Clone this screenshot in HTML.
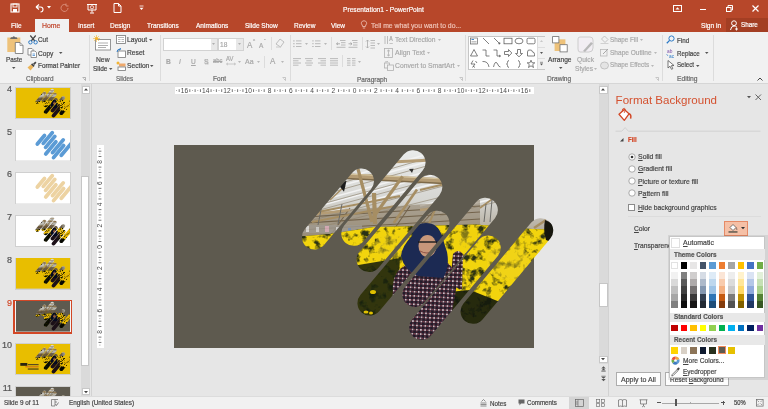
<!DOCTYPE html><html><head><meta charset="utf-8"><style>
html,body{margin:0;padding:0;}
body{width:768px;height:409px;overflow:hidden;position:relative;background:#E6E6E6;font-family:"Liberation Sans", sans-serif;}
.t{position:absolute;white-space:nowrap;line-height:1;-webkit-text-stroke:0.2px currentColor;}
#w{position:absolute;left:0;top:0;width:768px;height:409px;will-change:transform;}
.r{position:absolute;}
svg.r{overflow:visible;}
</style></head><body><div id="w">
<div class="r" style="left:0px;top:0px;width:768px;height:32px;background:#B7472A;"></div>
<div class="r" style="left:726px;top:18px;width:42px;height:14px;background:#A33E23;"></div>
<div class="r" style="left:35px;top:18.8px;width:34px;height:14.2px;background:#F1F1F1;"></div>
<span class="t" style="left:343.0px;top:5.88px;font-size:7.51px;color:#FFFFFF;font-weight:normal;transform:scaleX(0.8850);transform-origin:0 0;">Presentation1 - PowerPoint</span>
<svg class="r" style="left:10px;top:3px;" width="10" height="10" viewBox="0 0 10 10"><rect x="1" y="1" width="8" height="8" fill="none" stroke="#fff" stroke-width="1.1"/><rect x="3" y="1" width="4" height="3" fill="none" stroke="#fff" stroke-width="0.9"/><rect x="3" y="6" width="4" height="3" fill="#fff"/></svg>
<svg class="r" style="left:34px;top:3px;" width="12" height="10" viewBox="0 0 12 10"><path d="M2 4 L5 1.5 M2 4 L5 6.5 M2 4 H6.5 Q9 4 9 6.5 Q9 9 6.5 9" fill="none" stroke="#fff" stroke-width="1.1"/></svg>
<svg class="r" style="left:47px;top:6px;" width="4" height="3" viewBox="0 0 4 3"><path d="M0 0 H4 L2 2.5Z" fill="#fff"/></svg>
<svg class="r" style="left:60px;top:3px;" width="10" height="10" viewBox="0 0 10 10"><path d="M8 5 A3.5 3.5 0 1 1 6 1.8 M6 0.5 V3 H8.5" fill="none" stroke="#D98C77" stroke-width="1"/></svg>
<svg class="r" style="left:86px;top:3px;" width="12" height="11" viewBox="0 0 12 11"><path d="M1 1.5 H11 M2 1.5 V7 H10 V1.5 M6 7 V9.5 M4 10 H8" fill="none" stroke="#fff" stroke-width="1"/><circle cx="6" cy="4.3" r="1.6" fill="none" stroke="#fff" stroke-width="0.8"/></svg>
<svg class="r" style="left:113px;top:3px;" width="9" height="10" viewBox="0 0 9 10"><path d="M1 0.5 H5.5 L8 3 V9.5 H1Z M5.5 0.5 V3 H8" fill="none" stroke="#fff" stroke-width="1"/></svg>
<svg class="r" style="left:139px;top:6px;" width="5" height="5" viewBox="0 0 5 5"><path d="M0.5 0 H4.5" stroke="#fff" stroke-width="0.8"/><path d="M0.5 1.8 H4.5 L2.5 4Z" fill="#fff"/></svg>
<svg class="r" style="left:673px;top:5px;" width="9" height="7" viewBox="0 0 9 7"><rect x="0.5" y="0.5" width="8" height="6" fill="none" stroke="#fff" stroke-width="1"/><path d="M2.5 4.5 L4.5 2.3 L6.5 4.5Z" fill="#fff"/></svg>
<div class="r" style="left:700px;top:9px;width:6px;height:1.2px;background:#fff;"></div>
<svg class="r" style="left:726px;top:5px;" width="7" height="7" viewBox="0 0 7 7"><rect x="0.5" y="2.5" width="4.5" height="4" fill="none" stroke="#fff" stroke-width="1"/><path d="M2 2.5 V0.5 H6.5 V5 H5" fill="none" stroke="#fff" stroke-width="1"/></svg>
<svg class="r" style="left:752px;top:5px;" width="7" height="7" viewBox="0 0 7 7"><path d="M0.5 0.5 L6.5 6.5 M6.5 0.5 L0.5 6.5" stroke="#fff" stroke-width="1.2"/></svg>
<span class="t" style="left:10.9px;top:21.72px;font-size:7.40px;color:#FFFFFF;font-weight:normal;transform:scaleX(0.8850);transform-origin:0 0;">File</span>
<span class="t" style="left:77.6px;top:21.72px;font-size:7.40px;color:#FFFFFF;font-weight:normal;transform:scaleX(0.8850);transform-origin:0 0;">Insert</span>
<span class="t" style="left:110.0px;top:21.72px;font-size:7.40px;color:#FFFFFF;font-weight:normal;transform:scaleX(0.8850);transform-origin:0 0;">Design</span>
<span class="t" style="left:146.6px;top:21.72px;font-size:7.40px;color:#FFFFFF;font-weight:normal;transform:scaleX(0.8850);transform-origin:0 0;">Transitions</span>
<span class="t" style="left:195.5px;top:21.72px;font-size:7.40px;color:#FFFFFF;font-weight:normal;transform:scaleX(0.8850);transform-origin:0 0;">Animations</span>
<span class="t" style="left:245.4px;top:21.72px;font-size:7.40px;color:#FFFFFF;font-weight:normal;transform:scaleX(0.8850);transform-origin:0 0;">Slide Show</span>
<span class="t" style="left:293.9px;top:21.72px;font-size:7.40px;color:#FFFFFF;font-weight:normal;transform:scaleX(0.8850);transform-origin:0 0;">Review</span>
<span class="t" style="left:331.0px;top:21.72px;font-size:7.40px;color:#FFFFFF;font-weight:normal;transform:scaleX(0.8850);transform-origin:0 0;">View</span>
<span class="t" style="left:42.4px;top:21.59px;font-size:7.80px;color:#C0442A;font-weight:normal;transform:scaleX(0.8850);transform-origin:0 0;">Home</span>
<svg class="r" style="left:361px;top:20px;" width="6" height="10" viewBox="0 0 6 10"><path d="M3 0.8 A2.4 2.4 0 0 1 4.8 5 L4.4 6.5 H1.6 L1.2 5 A2.4 2.4 0 0 1 3 0.8Z M1.8 8 H4.2" fill="none" stroke="#F0C8BC" stroke-width="0.8"/></svg>
<span class="t" style="left:371.0px;top:21.61px;font-size:7.74px;color:#EFC3B6;font-weight:normal;transform:scaleX(0.8850);transform-origin:0 0;">Tell me what you want to do...</span>
<span class="t" style="left:700.5px;top:21.70px;font-size:7.46px;color:#FFFFFF;font-weight:normal;transform:scaleX(0.8850);transform-origin:0 0;">Sign in</span>
<svg class="r" style="left:730px;top:20px;" width="9" height="11" viewBox="0 0 9 11"><circle cx="4" cy="3.2" r="2.4" fill="none" stroke="#fff" stroke-width="1"/><path d="M0.5 10 Q1 6 4 6 Q6 6 6.8 7" fill="none" stroke="#fff" stroke-width="1"/><path d="M6.5 7.5 V10.5 M5 9 H8" stroke="#fff" stroke-width="0.9"/></svg>
<span class="t" style="left:741.0px;top:21.82px;font-size:7.12px;color:#FFFFFF;font-weight:normal;transform:scaleX(0.8850);transform-origin:0 0;">Share</span>
<div class="r" style="left:0px;top:32px;width:768px;height:51px;background:#F1F1F1;"></div>
<div class="r" style="left:0px;top:83px;width:768px;height:1px;background:#D6D6D6;"></div>
<div class="r" style="left:88.5px;top:35px;width:1px;height:46px;background:#DCDCDC;"></div>
<div class="r" style="left:159.5px;top:35px;width:1px;height:46px;background:#DCDCDC;"></div>
<div class="r" style="left:289.5px;top:35px;width:1px;height:46px;background:#DCDCDC;"></div>
<div class="r" style="left:465px;top:35px;width:1px;height:46px;background:#DCDCDC;"></div>
<div class="r" style="left:661.5px;top:35px;width:1px;height:46px;background:#DCDCDC;"></div>
<div class="r" style="left:713px;top:35px;width:1px;height:46px;background:#DCDCDC;"></div>
<svg class="r" style="left:6px;top:35px;" width="18" height="19" viewBox="0 0 18 19"><rect x="1.3" y="2.5" width="13" height="14.5" fill="#EEC27A"/><path d="M4 4 L5 2.2 H6.5 Q7.8 0.3 9.1 2.2 H10.6 L11.6 4Z" fill="#6A6A6A"/><path d="M9.3 7.5 H14 L17 10.5 V18.5 H9.3Z" fill="#fff" stroke="#6F6F6F" stroke-width="0.8"/><path d="M14 7.5 V10.5 H17" fill="none" stroke="#6F6F6F" stroke-width="0.6"/></svg>
<span class="t" style="left:6.0px;top:55.78px;font-size:7.23px;color:#444444;font-weight:normal;transform:scaleX(0.8850);transform-origin:0 0;">Paste</span>
<svg class="r" style="left:12px;top:67px;" width="4" height="3" viewBox="0 0 4 3"><path d="M0 0 H3.5 L1.75 2Z" fill="#555"/></svg>
<svg class="r" style="left:27.5px;top:35px;" width="10" height="10" viewBox="0 0 10 10"><path d="M2.3 0.5 L6.8 6 M7.7 0.5 L3.2 6" stroke="#444" stroke-width="1.2"/><circle cx="2.4" cy="7.3" r="1.7" fill="none" stroke="#2B79C5" stroke-width="1"/><circle cx="7.6" cy="7.3" r="1.7" fill="none" stroke="#2B79C5" stroke-width="1"/></svg>
<span class="t" style="left:38.4px;top:36.48px;font-size:7.23px;color:#444444;font-weight:normal;transform:scaleX(0.8850);transform-origin:0 0;">Cut</span>
<svg class="r" style="left:27px;top:48px;" width="10" height="10" viewBox="0 0 10 10"><path d="M1 0.5 H5 L6 1.5 V7 H1Z" fill="#fff" stroke="#777" stroke-width="0.8"/><path d="M4 3 H8 L9.5 4.5 V9.5 H4Z" fill="#fff" stroke="#777" stroke-width="0.8"/><path d="M5.5 6 H8 M5.5 7.5 H8" stroke="#2B79C5" stroke-width="0.7"/></svg>
<span class="t" style="left:38.4px;top:49.90px;font-size:7.46px;color:#444444;font-weight:normal;transform:scaleX(0.8850);transform-origin:0 0;">Copy</span>
<svg class="r" style="left:59px;top:52px;" width="4" height="3" viewBox="0 0 4 3"><path d="M0 0 H3.5 L1.75 2Z" fill="#555"/></svg>
<svg class="r" style="left:27px;top:61px;" width="10" height="10" viewBox="0 0 10 10"><path d="M0.5 6.5 L4 3.5 L6.5 6 L3.5 9.5Z" fill="#EBB55A"/><path d="M4 3.5 L5.2 2.3 L7.7 4.8 L6.5 6Z" fill="#444"/><path d="M6 2.8 L8.3 0.5 L9.5 1.7 L7.2 4Z" fill="#444"/></svg>
<span class="t" style="left:38.4px;top:62.19px;font-size:7.20px;color:#444444;font-weight:normal;transform:scaleX(0.8850);transform-origin:0 0;">Format Painter</span>
<span class="t" style="left:25.5px;top:75.47px;font-size:7.27px;color:#666666;font-weight:normal;transform:scaleX(0.8850);transform-origin:0 0;">Clipboard</span>
<svg class="r" style="left:82px;top:77px;" width="4" height="4" viewBox="0 0 4 4"><path d="M0.5 0.5 H3.5 V3.5 M1.5 1.5 L3.5 3.5" fill="none" stroke="#888" stroke-width="0.6"/></svg>
<svg class="r" style="left:93px;top:35px;" width="19" height="17" viewBox="0 0 19 17"><rect x="2.5" y="4.5" width="15" height="10.5" fill="#fff" stroke="#8A8A8A" stroke-width="0.9"/><path d="M5 8 H15 M5 10.5 H15 M5 12.5 H13" stroke="#9A9A9A" stroke-width="0.8"/><circle cx="3.5" cy="3.5" r="1.6" fill="#F2B535"/><path d="M3.5 0 V7 M0 3.5 H7 M1 1 L6 6 M6 1 L1 6" stroke="#F2B535" stroke-width="0.6"/></svg>
<span class="t" style="left:96.4px;top:55.64px;font-size:7.63px;color:#444444;font-weight:normal;transform:scaleX(0.8850);transform-origin:0 0;">New</span>
<span class="t" style="left:93.3px;top:64.74px;font-size:7.34px;color:#444444;font-weight:normal;transform:scaleX(0.8850);transform-origin:0 0;">Slide</span>
<svg class="r" style="left:108.5px;top:67.5px;" width="4" height="3" viewBox="0 0 4 3"><path d="M0 0 H3.5 L1.75 2Z" fill="#555"/></svg>
<svg class="r" style="left:116px;top:35px;" width="10" height="9" viewBox="0 0 10 9"><rect x="0.5" y="0.5" width="9" height="8" fill="#fff" stroke="#777" stroke-width="0.8"/><path d="M2 2.5 H8 M2 4.5 H4.5 M5.5 4.5 H8 M2 6.5 H4.5 M5.5 6.5 H8" stroke="#999" stroke-width="0.7"/></svg>
<span class="t" style="left:126.9px;top:36.36px;font-size:7.57px;color:#444444;font-weight:normal;transform:scaleX(0.8850);transform-origin:0 0;">Layout</span>
<svg class="r" style="left:149px;top:39px;" width="4" height="3" viewBox="0 0 4 3"><path d="M0 0 H3.5 L1.75 2Z" fill="#555"/></svg>
<svg class="r" style="left:116px;top:48px;" width="10" height="10" viewBox="0 0 10 10"><rect x="2" y="3" width="7.5" height="6.5" fill="#fff" stroke="#777" stroke-width="0.8"/><path d="M1 4 Q1 1 4.5 1.2 L4 0 M4.5 1.2 L3.2 2.2" fill="none" stroke="#2B79C5" stroke-width="1"/></svg>
<span class="t" style="left:126.9px;top:49.46px;font-size:7.57px;color:#444444;font-weight:normal;transform:scaleX(0.8850);transform-origin:0 0;">Reset</span>
<svg class="r" style="left:116px;top:61px;" width="10" height="10" viewBox="0 0 10 10"><circle cx="2" cy="2" r="1.5" fill="#F2B535"/><rect x="3" y="2.5" width="6.5" height="3" fill="#EFA96D"/><rect x="2" y="6" width="7.5" height="3.5" fill="#fff" stroke="#777" stroke-width="0.8"/></svg>
<span class="t" style="left:126.9px;top:62.36px;font-size:7.57px;color:#444444;font-weight:normal;transform:scaleX(0.8850);transform-origin:0 0;">Section</span>
<svg class="r" style="left:150px;top:65px;" width="4" height="3" viewBox="0 0 4 3"><path d="M0 0 H3.5 L1.75 2Z" fill="#555"/></svg>
<span class="t" style="left:116.2px;top:75.52px;font-size:7.12px;color:#666666;font-weight:normal;transform:scaleX(0.8850);transform-origin:0 0;">Slides</span>
<div class="r" style="left:162.5px;top:38px;width:55px;height:12.5px;background:#FFFFFF;box-sizing:border-box;border:1px solid #D2D2D2;"></div>
<div class="r" style="left:210.5px;top:39px;width:6px;height:10.5px;background:#E8E8E8;"></div>
<svg class="r" style="left:212px;top:43px;" width="4" height="3" viewBox="0 0 4 3"><path d="M0 0 H3 L1.5 2Z" fill="#B0B0B0"/></svg>
<div class="r" style="left:217.5px;top:38px;width:26px;height:12.5px;background:#FFFFFF;box-sizing:border-box;border:1px solid #D2D2D2;"></div>
<div class="r" style="left:236px;top:39px;width:6.5px;height:10.5px;background:#E8E8E8;"></div>
<svg class="r" style="left:238px;top:43px;" width="4" height="3" viewBox="0 0 4 3"><path d="M0 0 H3 L1.5 2Z" fill="#B0B0B0"/></svg>
<span class="t" style="left:220.0px;top:40.90px;font-size:7.46px;color:#A8A8A8;font-weight:normal;transform:scaleX(0.8850);transform-origin:0 0;">18</span>
<span class="t" style="left:247.0px;top:40.87px;font-size:9.04px;color:#A8A8A8;font-weight:normal;transform:scaleX(0.8850);transform-origin:0 0;">A</span>
<span class="t" style="left:252.5px;top:38.70px;font-size:5.08px;color:#A8A8A8;font-weight:normal;transform:scaleX(0.8850);transform-origin:0 0;">^</span>
<span class="t" style="left:259.0px;top:41.94px;font-size:7.34px;color:#A8A8A8;font-weight:normal;transform:scaleX(0.8850);transform-origin:0 0;">A</span>
<span class="t" style="left:264.0px;top:38.51px;font-size:5.65px;color:#A8A8A8;font-weight:normal;transform:scaleX(0.8850);transform-origin:0 0;">ˇ</span>
<div class="r" style="left:270.5px;top:37px;width:1px;height:13px;background:#DCDCDC;"></div>
<svg class="r" style="left:275px;top:38px;" width="10" height="10" viewBox="0 0 10 10"><path d="M1 6 L5 1 L9 4 L5.5 9Z" fill="none" stroke="#B8B8B8" stroke-width="0.9"/><path d="M1 9 H6" stroke="#C8C8C8"/></svg>
<span class="t" style="left:165.5px;top:57.80px;font-size:7.46px;color:#A8A8A8;font-weight:bold;transform:scaleX(0.8850);transform-origin:0 0;">B</span>
<span class="t" style="left:178.8px;top:57.80px;font-size:7.46px;color:#A8A8A8;font-weight:normal;transform:scaleX(0.8850);transform-origin:0 0;font-style:italic">I</span>
<span class="t" style="left:190.5px;top:57.80px;font-size:7.46px;color:#A8A8A8;font-weight:normal;transform:scaleX(0.8850);transform-origin:0 0;text-decoration:underline">U</span>
<span class="t" style="left:203.5px;top:57.73px;font-size:7.68px;color:#A8A8A8;font-weight:normal;transform:scaleX(0.8850);transform-origin:0 0;text-shadow:0.7px 0.7px 0 #CFCFCF">S</span>
<span class="t" style="left:213.3px;top:58.10px;font-size:6.55px;color:#A8A8A8;font-weight:normal;transform:scaleX(0.8850);transform-origin:0 0;text-decoration:line-through">abc</span>
<span class="t" style="left:226.3px;top:56.20px;font-size:6.55px;color:#A8A8A8;font-weight:normal;transform:scaleX(0.8850);transform-origin:0 0;">AV</span>
<svg class="r" style="left:226px;top:62px;" width="10" height="4" viewBox="0 0 10 4"><path d="M0.5 2 H9.5 M0.5 2 L2 0.8 M0.5 2 L2 3.2 M9.5 2 L8 0.8 M9.5 2 L8 3.2" fill="none" stroke="#B0B0B0" stroke-width="0.6"/></svg>
<svg class="r" style="left:237.5px;top:61px;" width="4" height="3" viewBox="0 0 4 3"><path d="M0 0 H3 L1.5 2Z" fill="#B8B8B8"/></svg>
<span class="t" style="left:244.6px;top:57.65px;font-size:7.91px;color:#A8A8A8;font-weight:normal;transform:scaleX(0.8850);transform-origin:0 0;">Aa</span>
<svg class="r" style="left:256.5px;top:61px;" width="4" height="3" viewBox="0 0 4 3"><path d="M0 0 H3 L1.5 2Z" fill="#B8B8B8"/></svg>
<div class="r" style="left:264px;top:56px;width:1px;height:12px;background:#DCDCDC;"></div>
<span class="t" style="left:270.0px;top:57.27px;font-size:9.04px;color:#A8A8A8;font-weight:normal;transform:scaleX(0.8850);transform-origin:0 0;">A</span>
<svg class="r" style="left:281px;top:61px;" width="4" height="3" viewBox="0 0 4 3"><path d="M0 0 H3 L1.5 2Z" fill="#B8B8B8"/></svg>
<span class="t" style="left:212.7px;top:75.42px;font-size:7.40px;color:#666666;font-weight:normal;transform:scaleX(0.8850);transform-origin:0 0;">Font</span>
<svg class="r" style="left:282px;top:77px;" width="4" height="4" viewBox="0 0 4 4"><path d="M0.5 0.5 H3.5 V3.5 M1.5 1.5 L3.5 3.5" fill="none" stroke="#AAA" stroke-width="0.6"/></svg>
<svg class="r" style="left:292.5px;top:40px;" width="9" height="8" viewBox="0 0 9 8"><rect x="0.3" y="0.3" width="1.2" height="1.2" fill="#B0B0B0"/><path d="M3 0.9 H8.5" stroke="#B4B4B4" stroke-width="0.9"/><rect x="0.3" y="3.0999999999999996" width="1.2" height="1.2" fill="#B0B0B0"/><path d="M3 3.6999999999999997 H8.5" stroke="#B4B4B4" stroke-width="0.9"/><rect x="0.3" y="5.8999999999999995" width="1.2" height="1.2" fill="#B0B0B0"/><path d="M3 6.5 H8.5" stroke="#B4B4B4" stroke-width="0.9"/></svg>
<svg class="r" style="left:304.5px;top:43px;" width="4" height="3" viewBox="0 0 4 3"><path d="M0 0 H3 L1.5 2Z" fill="#B8B8B8"/></svg>
<svg class="r" style="left:312px;top:40px;" width="9" height="8" viewBox="0 0 9 8"><path d="M0.3 0.9 H1.6" stroke="#B0B0B0" stroke-width="1"/><path d="M3 0.9 H8.5" stroke="#B4B4B4" stroke-width="0.9"/><path d="M0.3 3.6999999999999997 H1.6" stroke="#B0B0B0" stroke-width="1"/><path d="M3 3.6999999999999997 H8.5" stroke="#B4B4B4" stroke-width="0.9"/><path d="M0.3 6.5 H1.6" stroke="#B0B0B0" stroke-width="1"/><path d="M3 6.5 H8.5" stroke="#B4B4B4" stroke-width="0.9"/></svg>
<svg class="r" style="left:323.5px;top:43px;" width="4" height="3" viewBox="0 0 4 3"><path d="M0 0 H3 L1.5 2Z" fill="#B8B8B8"/></svg>
<div class="r" style="left:331px;top:37px;width:1px;height:13px;background:#DCDCDC;"></div>
<svg class="r" style="left:335.5px;top:40px;" width="10" height="8" viewBox="0 0 10 8"><path d="M4 0.5 H9.5 M5 2.7 H9.5 M5 5 H9.5 M0.5 7.3 H9.5" stroke="#B4B4B4" stroke-width="0.9"/><path d="M0.5 3.8 H4 M0.5 3.8 L2 2.5 M0.5 3.8 L2 5" fill="none" stroke="#A0A0A0" stroke-width="0.8"/></svg>
<svg class="r" style="left:347.5px;top:40px;" width="10" height="8" viewBox="0 0 10 8"><path d="M4 0.5 H9.5 M5 2.7 H9.5 M5 5 H9.5 M0.5 7.3 H9.5" stroke="#B4B4B4" stroke-width="0.9"/><path d="M0.5 3.8 H4 M4 3.8 L2.5 2.5 M4 3.8 L2.5 5" fill="none" stroke="#A0A0A0" stroke-width="0.8"/></svg>
<div class="r" style="left:361.5px;top:37px;width:1px;height:13px;background:#DCDCDC;"></div>
<svg class="r" style="left:366px;top:39px;" width="9" height="10" viewBox="0 0 9 10"><path d="M1.5 1 V9 M0 2.5 L1.5 1 L3 2.5 M0 7.5 L1.5 9 L3 7.5" fill="none" stroke="#A8A8A8" stroke-width="0.8"/><path d="M4.5 1.5 H9 M4.5 4 H9 M4.5 6.5 H9 M4.5 9 H9" stroke="#B4B4B4" stroke-width="0.9"/></svg>
<svg class="r" style="left:377px;top:43px;" width="4" height="3" viewBox="0 0 4 3"><path d="M0 0 H3 L1.5 2Z" fill="#B8B8B8"/></svg>
<svg class="r" style="left:292.5px;top:57.5px;" width="9" height="8" viewBox="0 0 9 8"><path d="M0 0.6 H8" stroke="#B4B4B4" stroke-width="0.9"/><path d="M0 2.8000000000000003 H5.5" stroke="#B4B4B4" stroke-width="0.9"/><path d="M0 5.0 H8" stroke="#B4B4B4" stroke-width="0.9"/><path d="M0 7.2 H5.5" stroke="#B4B4B4" stroke-width="0.9"/></svg>
<svg class="r" style="left:305px;top:57.5px;" width="9" height="8" viewBox="0 0 9 8"><path d="M0.0 0.6 H8.0" stroke="#B4B4B4" stroke-width="0.9"/><path d="M1.25 2.8000000000000003 H6.75" stroke="#B4B4B4" stroke-width="0.9"/><path d="M0.0 5.0 H8.0" stroke="#B4B4B4" stroke-width="0.9"/><path d="M1.25 7.2 H6.75" stroke="#B4B4B4" stroke-width="0.9"/></svg>
<svg class="r" style="left:317.8px;top:57.5px;" width="9" height="8" viewBox="0 0 9 8"><path d="M0 0.6 H8" stroke="#B4B4B4" stroke-width="0.9"/><path d="M2.5 2.8000000000000003 H8.0" stroke="#B4B4B4" stroke-width="0.9"/><path d="M0 5.0 H8" stroke="#B4B4B4" stroke-width="0.9"/><path d="M2.5 7.2 H8.0" stroke="#B4B4B4" stroke-width="0.9"/></svg>
<svg class="r" style="left:330.2px;top:57.5px;" width="9" height="8" viewBox="0 0 9 8"><path d="M0 0.6 H8" stroke="#B4B4B4" stroke-width="0.9"/><path d="M0 2.8000000000000003 H8" stroke="#B4B4B4" stroke-width="0.9"/><path d="M0 5.0 H8" stroke="#B4B4B4" stroke-width="0.9"/><path d="M0 7.2 H8" stroke="#B4B4B4" stroke-width="0.9"/></svg>
<div class="r" style="left:342.4px;top:55px;width:1px;height:12px;background:#DCDCDC;"></div>
<svg class="r" style="left:347px;top:57.5px;" width="9" height="8" viewBox="0 0 9 8"><path d="M0 0.6 H3.5 M0 2.8 H3.5 M0 5 H3.5 M0 7.2 H3.5 M5 0.6 H8.5 M5 2.8 H8.5 M5 5 H8.5 M5 7.2 H8.5" stroke="#B4B4B4" stroke-width="0.9"/></svg>
<svg class="r" style="left:358px;top:61px;" width="4" height="3" viewBox="0 0 4 3"><path d="M0 0 H3 L1.5 2Z" fill="#B8B8B8"/></svg>
<svg class="r" style="left:384px;top:35px;" width="9" height="10" viewBox="0 0 9 10"><path d="M1 1 V9 M3.5 1 V9" stroke="#B0B0B0" stroke-width="0.8"/><path d="M5.5 6 L7 1 L8.5 6 M6 4.2 H8" fill="none" stroke="#A8A8A8" stroke-width="0.8"/><path d="M5.5 8.5 H8.8" stroke="#B0B0B0" stroke-width="0.7"/></svg>
<span class="t" style="left:394.6px;top:36.36px;font-size:7.57px;color:#A8A8A8;font-weight:normal;transform:scaleX(0.8850);transform-origin:0 0;">Text Direction</span>
<svg class="r" style="left:437.5px;top:39px;" width="4" height="3" viewBox="0 0 4 3"><path d="M0 0 H3 L1.5 2Z" fill="#B8B8B8"/></svg>
<svg class="r" style="left:384px;top:48px;" width="9" height="10" viewBox="0 0 9 10"><rect x="0.5" y="0.5" width="8" height="9" fill="none" stroke="#B0B0B0" stroke-width="0.8"/><path d="M4.5 2 V8 M3 3.3 L4.5 2 L6 3.3 M3 6.7 L4.5 8 L6 6.7" fill="none" stroke="#A8A8A8" stroke-width="0.7"/></svg>
<span class="t" style="left:394.6px;top:49.27px;font-size:7.85px;color:#A8A8A8;font-weight:normal;transform:scaleX(0.8850);transform-origin:0 0;">Align Text</span>
<svg class="r" style="left:427px;top:52px;" width="4" height="3" viewBox="0 0 4 3"><path d="M0 0 H3 L1.5 2Z" fill="#B8B8B8"/></svg>
<svg class="r" style="left:384px;top:61px;" width="10" height="10" viewBox="0 0 10 10"><rect x="0.5" y="2" width="5" height="5" fill="none" stroke="#B0B0B0" stroke-width="0.8"/><rect x="3.5" y="4" width="6" height="5.5" fill="#F1F1F1" stroke="#B0B0B0" stroke-width="0.8"/><path d="M1 1 L4 0.5" stroke="#B0B0B0" stroke-width="0.8"/></svg>
<span class="t" style="left:394.6px;top:62.24px;font-size:7.65px;color:#A8A8A8;font-weight:normal;transform:scaleX(0.8850);transform-origin:0 0;">Convert to SmartArt</span>
<svg class="r" style="left:456.5px;top:65px;" width="4" height="3" viewBox="0 0 4 3"><path d="M0 0 H3 L1.5 2Z" fill="#B8B8B8"/></svg>
<span class="t" style="left:356.7px;top:75.65px;font-size:7.31px;color:#666666;font-weight:normal;transform:scaleX(0.8850);transform-origin:0 0;">Paragraph</span>
<svg class="r" style="left:459px;top:77px;" width="4" height="4" viewBox="0 0 4 4"><path d="M0.5 0.5 H3.5 V3.5 M1.5 1.5 L3.5 3.5" fill="none" stroke="#AAA" stroke-width="0.6"/></svg>
<div class="r" style="left:468.4px;top:35.5px;width:77px;height:34.5px;background:#FFFFFF;box-sizing:border-box;border:1px solid #C6C6C6;"></div>
<div class="r" style="left:537.5px;top:36.5px;width:7.5px;height:32.5px;background:#F1F1F1;"></div>
<div class="r" style="left:537.5px;top:46.8px;width:7.5px;height:0.8px;background:#DDDDDD;"></div>
<div class="r" style="left:537.5px;top:57.8px;width:7.5px;height:0.8px;background:#DDDDDD;"></div>
<div class="r" style="left:537px;top:36.5px;width:0.8px;height:32.5px;background:#DDDDDD;"></div>
<svg class="r" style="left:539.5px;top:40px;" width="4" height="3" viewBox="0 0 4 3"><path d="M0 2 H3 L1.5 0Z" fill="#C8C8C8"/></svg>
<svg class="r" style="left:539.5px;top:52px;" width="4" height="3" viewBox="0 0 4 3"><path d="M0 0 H3 L1.5 2Z" fill="#555"/></svg>
<svg class="r" style="left:539.5px;top:62px;" width="4" height="4" viewBox="0 0 4 4"><path d="M0 0.3 H3" stroke="#555" stroke-width="0.6"/><path d="M0 1.5 H3 L1.5 3.5Z" fill="#555"/></svg>
<svg class="r" style="left:469.4px;top:36.3px;" width="10" height="10" viewBox="0 0 10 10"><g transform="translate(5 5)"><rect x="-3.5" y="-3" width="7" height="6" fill="none" stroke="#666" stroke-width="0.7"/><path d="M-2.5 -1.5 H0" stroke="#2B79C5" stroke-width="0.9"/><path d="M-2.5 0.5 H2.5 M-2.5 2 H2.5" stroke="#999" stroke-width="0.6"/></g></svg>
<svg class="r" style="left:480.7px;top:36.3px;" width="10" height="10" viewBox="0 0 10 10"><g transform="translate(5 5)"><path d="M-3 -3 L3 3" fill="none" stroke="#555" stroke-width="0.75"/></g></svg>
<svg class="r" style="left:491.6px;top:36.3px;" width="10" height="10" viewBox="0 0 10 10"><g transform="translate(5 5)"><path d="M-3 -3 L3 3 M3 3 L1.2 2.6 M3 3 L2.6 1.2" fill="none" stroke="#555" stroke-width="0.75"/></g></svg>
<svg class="r" style="left:503.1px;top:36.3px;" width="10" height="10" viewBox="0 0 10 10"><g transform="translate(5 5)"><rect x="-4" y="-2.8" width="8" height="5.6" fill="none" stroke="#555" stroke-width="0.75"/></g></svg>
<svg class="r" style="left:514.4px;top:36.3px;" width="10" height="10" viewBox="0 0 10 10"><g transform="translate(5 5)"><ellipse cx="0" cy="0" rx="4" ry="2.8" fill="none" stroke="#555" stroke-width="0.75"/></g></svg>
<svg class="r" style="left:525.7px;top:36.3px;" width="10" height="10" viewBox="0 0 10 10"><g transform="translate(5 5)"><rect x="-4" y="-2.8" width="8" height="5.6" rx="1.3" fill="none" stroke="#555" stroke-width="0.75"/></g></svg>
<svg class="r" style="left:469.4px;top:47.8px;" width="10" height="10" viewBox="0 0 10 10"><g transform="translate(5 5)"><path d="M0 -3.5 L3.5 3 H-3.5Z" fill="none" stroke="#555" stroke-width="0.75"/></g></svg>
<svg class="r" style="left:480.7px;top:47.8px;" width="10" height="10" viewBox="0 0 10 10"><g transform="translate(5 5)"><path d="M-3.5 -3 H0 V3 H3.5" fill="none" stroke="#555" stroke-width="0.75"/></g></svg>
<svg class="r" style="left:491.6px;top:47.8px;" width="10" height="10" viewBox="0 0 10 10"><g transform="translate(5 5)"><path d="M-3.5 -3 H0 V3 H3.5 M3.5 3 L2 2 M3.5 3 L2 4" fill="none" stroke="#555" stroke-width="0.75"/></g></svg>
<svg class="r" style="left:503.1px;top:47.8px;" width="10" height="10" viewBox="0 0 10 10"><g transform="translate(5 5)"><path d="M-3.5 -1.5 H0.5 V-3.5 L3.8 0 L0.5 3.5 V1.5 H-3.5Z" fill="none" stroke="#555" stroke-width="0.75"/></g></svg>
<svg class="r" style="left:514.4px;top:47.8px;" width="10" height="10" viewBox="0 0 10 10"><g transform="translate(5 5)"><path d="M-1.5 -3.5 H1.5 V0.5 H3.5 L0 3.8 L-3.5 0.5 H-1.5Z" fill="none" stroke="#555" stroke-width="0.75"/></g></svg>
<svg class="r" style="left:525.7px;top:47.8px;" width="10" height="10" viewBox="0 0 10 10"><g transform="translate(5 5)"><path d="M-3.5 3 V-1 Q-3.5 -3.5 -1 -3 Q1 -3.5 1.5 -1 Q3.5 -1 3.5 1.2 V3Z" fill="none" stroke="#555" stroke-width="0.75"/></g></svg>
<svg class="r" style="left:469.4px;top:58.7px;" width="10" height="10" viewBox="0 0 10 10"><g transform="translate(5 5)"><path d="M-1 -3.5 L-3 0 L1 0 L-1.5 3.5 M1 3.5 L-1 2 M1.5 -3 L3 -1" fill="none" stroke="#555" stroke-width="0.75"/></g></svg>
<svg class="r" style="left:480.7px;top:58.7px;" width="10" height="10" viewBox="0 0 10 10"><g transform="translate(5 5)"><path d="M-3.5 -2.5 Q2 -3 3 3" fill="none" stroke="#555" stroke-width="0.75"/></g></svg>
<svg class="r" style="left:491.6px;top:58.7px;" width="10" height="10" viewBox="0 0 10 10"><g transform="translate(5 5)"><path d="M-3.5 3 Q-2 -3.5 0 -1 Q2 3.5 3.5 3" fill="none" stroke="#555" stroke-width="0.75"/></g></svg>
<svg class="r" style="left:503.1px;top:58.7px;" width="10" height="10" viewBox="0 0 10 10"><g transform="translate(5 5)"><path d="M1 -3.5 Q-0.5 -3.5 -0.5 -1.5 Q-0.5 0 -1.5 0 Q-0.5 0 -0.5 1.5 Q-0.5 3.5 1 3.5" fill="none" stroke="#555" stroke-width="0.75"/></g></svg>
<svg class="r" style="left:514.4px;top:58.7px;" width="10" height="10" viewBox="0 0 10 10"><g transform="translate(5 5)"><path d="M-1 -3.5 Q0.5 -3.5 0.5 -1.5 Q0.5 0 1.5 0 Q0.5 0 0.5 1.5 Q0.5 3.5 -1 3.5" fill="none" stroke="#555" stroke-width="0.75"/></g></svg>
<svg class="r" style="left:525.7px;top:58.7px;" width="10" height="10" viewBox="0 0 10 10"><g transform="translate(5 5)"><path d="M0 -3.8 L1.1 -1.2 L3.8 -1.2 L1.7 0.6 L2.5 3.5 L0 1.8 L-2.5 3.5 L-1.7 0.6 L-3.8 -1.2 L-1.1 -1.2Z" fill="none" stroke="#555" stroke-width="0.75"/></g></svg>
<svg class="r" style="left:552px;top:36px;" width="16" height="17" viewBox="0 0 16 17"><rect x="2.6" y="3.3" width="10.8" height="11.7" fill="#EEC27A"/><rect x="0.6" y="0.6" width="6.3" height="6.3" fill="#fff" stroke="#6F6F6F" stroke-width="0.8"/><rect x="8" y="8.7" width="7.2" height="7.2" fill="#fff" stroke="#6F6F6F" stroke-width="0.8"/></svg>
<span class="t" style="left:548.2px;top:55.90px;font-size:7.46px;color:#444444;font-weight:normal;transform:scaleX(0.8850);transform-origin:0 0;">Arrange</span>
<svg class="r" style="left:559px;top:67px;" width="4" height="3" viewBox="0 0 4 3"><path d="M0 0 H3.5 L1.75 2Z" fill="#555"/></svg>
<svg class="r" style="left:577px;top:36px;" width="18" height="18" viewBox="0 0 18 18"><path d="M3 1 H13 Q16 1 16 4 V12 Q16 16 12 16 H3 Q1 16 1 13 V3 Q1 1 3 1Z" fill="#F2EEF3" stroke="#C8C8C8" stroke-width="0.9"/><path d="M6 15 L14 6 L16 7.5 L8 16Z" fill="#B8B8B8"/></svg>
<span class="t" style="left:577.2px;top:55.88px;font-size:7.51px;color:#A8A8A8;font-weight:normal;transform:scaleX(0.8850);transform-origin:0 0;">Quick</span>
<span class="t" style="left:574.6px;top:64.70px;font-size:7.46px;color:#A8A8A8;font-weight:normal;transform:scaleX(0.8850);transform-origin:0 0;">Styles</span>
<svg class="r" style="left:594px;top:67.5px;" width="4" height="3" viewBox="0 0 4 3"><path d="M0 0 H3 L1.5 2Z" fill="#B8B8B8"/></svg>
<span class="t" style="left:546.8px;top:75.40px;font-size:7.46px;color:#666666;font-weight:normal;transform:scaleX(0.8850);transform-origin:0 0;">Drawing</span>
<svg class="r" style="left:600px;top:35px;" width="9" height="9" viewBox="0 0 9 9"><path d="M1.5 4 L4.5 1 L8 4.5 L5 7.5Z" fill="none" stroke="#B8B8B8" stroke-width="0.8"/><path d="M0.5 8.5 H8.5" stroke="#D0D0D0" stroke-width="1"/></svg>
<span class="t" style="left:610.2px;top:36.51px;font-size:7.14px;color:#A8A8A8;font-weight:normal;transform:scaleX(0.8850);transform-origin:0 0;">Shape Fill</span>
<svg class="r" style="left:640px;top:39px;" width="4" height="3" viewBox="0 0 4 3"><path d="M0 0 H3 L1.5 2Z" fill="#B8B8B8"/></svg>
<svg class="r" style="left:600px;top:48px;" width="9" height="9" viewBox="0 0 9 9"><rect x="0.5" y="1.5" width="6.5" height="6.5" fill="none" stroke="#B8B8B8" stroke-width="0.8"/><path d="M3 6 L8 1" stroke="#A8A8A8" stroke-width="1"/></svg>
<span class="t" style="left:610.2px;top:49.22px;font-size:7.41px;color:#A8A8A8;font-weight:normal;transform:scaleX(0.8850);transform-origin:0 0;">Shape Outline</span>
<svg class="r" style="left:653.5px;top:52px;" width="4" height="3" viewBox="0 0 4 3"><path d="M0 0 H3 L1.5 2Z" fill="#B8B8B8"/></svg>
<svg class="r" style="left:600px;top:61px;" width="9" height="9" viewBox="0 0 9 9"><ellipse cx="4.5" cy="4.5" rx="4" ry="3.5" fill="#E4E4E4" stroke="#B8B8B8" stroke-width="0.8"/></svg>
<span class="t" style="left:610.2px;top:61.91px;font-size:7.13px;color:#A8A8A8;font-weight:normal;transform:scaleX(0.8850);transform-origin:0 0;">Shape Effects</span>
<svg class="r" style="left:651px;top:64.5px;" width="4" height="3" viewBox="0 0 4 3"><path d="M0 0 H3 L1.5 2Z" fill="#B8B8B8"/></svg>
<svg class="r" style="left:655px;top:77px;" width="4" height="4" viewBox="0 0 4 4"><path d="M0.5 0.5 H3.5 V3.5 M1.5 1.5 L3.5 3.5" fill="none" stroke="#AAA" stroke-width="0.6"/></svg>
<svg class="r" style="left:666px;top:35px;" width="9" height="9" viewBox="0 0 9 9"><circle cx="5.5" cy="3.5" r="2.6" fill="none" stroke="#2B79C5" stroke-width="1"/><path d="M3.6 5.4 L0.8 8.2" stroke="#2B79C5" stroke-width="1.3"/></svg>
<span class="t" style="left:676.6px;top:36.55px;font-size:7.03px;color:#444444;font-weight:normal;transform:scaleX(0.8850);transform-origin:0 0;">Find</span>
<svg class="r" style="left:665.5px;top:48px;" width="10" height="10" viewBox="0 0 10 10"><text x="1" y="4.5" font-size="4.8" font-family="Liberation Sans" fill="#7A4EA8">ab</text><text x="3" y="9.5" font-size="4.8" font-family="Liberation Sans" fill="#2B79C5">ac</text><path d="M0.5 6 L2 8" stroke="#2B79C5" stroke-width="0.6"/></svg>
<span class="t" style="left:676.6px;top:49.55px;font-size:7.02px;color:#444444;font-weight:normal;transform:scaleX(0.8850);transform-origin:0 0;">Replace</span>
<svg class="r" style="left:705px;top:52px;" width="4" height="3" viewBox="0 0 4 3"><path d="M0 0 H3.5 L1.75 2Z" fill="#555"/></svg>
<svg class="r" style="left:667px;top:60px;" width="8" height="10" viewBox="0 0 8 10"><path d="M1 0.5 V8 L3 6.2 L4.5 9.3 L5.8 8.7 L4.4 5.6 L7 5.5Z" fill="#fff" stroke="#555" stroke-width="0.8"/></svg>
<span class="t" style="left:676.6px;top:62.08px;font-size:6.92px;color:#444444;font-weight:normal;transform:scaleX(0.8850);transform-origin:0 0;">Select</span>
<svg class="r" style="left:695.5px;top:64.5px;" width="4" height="3" viewBox="0 0 4 3"><path d="M0 0 H3.5 L1.75 2Z" fill="#555"/></svg>
<span class="t" style="left:677.0px;top:75.35px;font-size:7.62px;color:#666666;font-weight:normal;transform:scaleX(0.8850);transform-origin:0 0;">Editing</span>
<svg class="r" style="left:757px;top:77px;" width="6" height="4" viewBox="0 0 6 4"><path d="M0.5 3.5 L3 1 L5.5 3.5" fill="none" stroke="#444" stroke-width="1"/></svg>
<div class="r" style="left:0px;top:84px;width:81px;height:312px;background:#E6E6E6;"></div>
<div class="r" style="left:81px;top:84px;width:9px;height:312px;background:#DADADA;"></div>
<div class="r" style="left:90.5px;top:84px;width:1.2px;height:312px;background:#D2D2D2;"></div>
<div class="r" style="left:81.5px;top:85.5px;width:8px;height:8px;background:#FFFFFF;box-sizing:border-box;border:0.6px solid #C8C8C8;"></div>
<svg class="r" style="left:83.5px;top:88px;" width="4" height="3" viewBox="0 0 4 3"><path d="M0 2.5 H4 L2 0.3Z" fill="#444"/></svg>
<div class="r" style="left:81.5px;top:388px;width:8px;height:7px;background:#FFFFFF;box-sizing:border-box;border:0.6px solid #C8C8C8;"></div>
<svg class="r" style="left:83.5px;top:390.5px;" width="4" height="3" viewBox="0 0 4 3"><path d="M0 0 H4 L2 2.2Z" fill="#444"/></svg>
<div class="r" style="left:81.3px;top:175.8px;width:8.2px;height:190px;background:#FFFFFF;box-sizing:border-box;border:0.8px solid #C6C6C6;"></div>
<div class="r" style="left:92px;top:84px;width:507px;height:312px;background:#E6E6E6;"></div>
<div class="r" style="left:599px;top:84px;width:8.5px;height:312px;background:#DADADA;"></div>
<div class="r" style="left:607.6px;top:84px;width:1.2px;height:312px;background:#D2D2D2;"></div>
<div class="r" style="left:599px;top:85.5px;width:8.5px;height:8.3px;background:#FFFFFF;box-sizing:border-box;border:0.6px solid #C8C8C8;"></div>
<svg class="r" style="left:601.2px;top:88px;" width="4" height="3" viewBox="0 0 4 3"><path d="M0 2.5 H4 L2 0.3Z" fill="#444"/></svg>
<div class="r" style="left:599px;top:283.2px;width:8.5px;height:23.7px;background:#FFFFFF;box-sizing:border-box;border:0.8px solid #C6C6C6;"></div>
<div class="r" style="left:599px;top:355.5px;width:8.5px;height:7.5px;background:#FFFFFF;box-sizing:border-box;border:0.6px solid #C8C8C8;"></div>
<svg class="r" style="left:601.2px;top:358px;" width="4" height="3" viewBox="0 0 4 3"><path d="M0 0 H4 L2 2.2Z" fill="#444"/></svg>
<div class="r" style="left:599px;top:364px;width:8.5px;height:32px;background:#E6E6E6;"></div>
<svg class="r" style="left:600.8px;top:366.2px;" width="5" height="6" viewBox="0 0 5 6"><path d="M0.3 2.4 L2.5 0.2 L4.7 2.4Z M0.3 4.6 L2.5 2.6 L4.7 4.6Z" fill="#555"/><path d="M0.3 5.4 H4.7" stroke="#555" stroke-width="0.6"/></svg>
<svg class="r" style="left:600.8px;top:375.6px;" width="5" height="6" viewBox="0 0 5 6"><path d="M0.3 3 L2.5 5.2 L4.7 3Z M0.3 0.8 L2.5 2.8 L4.7 0.8Z" fill="#555"/><path d="M0.3 0.2 H4.7" stroke="#555" stroke-width="0.6"/></svg>
<div class="r" style="left:175px;top:86.9px;width:358.6px;height:6.9px;background:#FFFFFF;"></div>
<svg class="r" style="left:175px;top:87px;" width="359" height="7" viewBox="0 0 359 7"><path d="M1.53 3.0 V4.0" stroke="#8A8A8A" stroke-width="0.7"/><path d="M4.19 2.2 V5" stroke="#555" stroke-width="0.8"/><text x="9.50" y="5.5" font-size="6.6" font-family="Liberation Sans" fill="#4A4A4A" text-anchor="middle">16</text><path d="M14.81 2.2 V5" stroke="#555" stroke-width="0.8"/><path d="M17.47 3.0 V4.0" stroke="#8A8A8A" stroke-width="0.7"/><path d="M20.12 2.2 V5" stroke="#555" stroke-width="0.8"/><path d="M22.78 3.0 V4.0" stroke="#8A8A8A" stroke-width="0.7"/><path d="M25.44 2.2 V5" stroke="#555" stroke-width="0.8"/><text x="30.75" y="5.5" font-size="6.6" font-family="Liberation Sans" fill="#4A4A4A" text-anchor="middle">14</text><path d="M36.06 2.2 V5" stroke="#555" stroke-width="0.8"/><path d="M38.72 3.0 V4.0" stroke="#8A8A8A" stroke-width="0.7"/><path d="M41.38 2.2 V5" stroke="#555" stroke-width="0.8"/><path d="M44.03 3.0 V4.0" stroke="#8A8A8A" stroke-width="0.7"/><path d="M46.69 2.2 V5" stroke="#555" stroke-width="0.8"/><text x="52.00" y="5.5" font-size="6.6" font-family="Liberation Sans" fill="#4A4A4A" text-anchor="middle">12</text><path d="M57.31 2.2 V5" stroke="#555" stroke-width="0.8"/><path d="M59.97 3.0 V4.0" stroke="#8A8A8A" stroke-width="0.7"/><path d="M62.62 2.2 V5" stroke="#555" stroke-width="0.8"/><path d="M65.28 3.0 V4.0" stroke="#8A8A8A" stroke-width="0.7"/><path d="M67.94 2.2 V5" stroke="#555" stroke-width="0.8"/><text x="73.25" y="5.5" font-size="6.6" font-family="Liberation Sans" fill="#4A4A4A" text-anchor="middle">10</text><path d="M78.56 2.2 V5" stroke="#555" stroke-width="0.8"/><path d="M81.22 3.0 V4.0" stroke="#8A8A8A" stroke-width="0.7"/><path d="M83.88 2.2 V5" stroke="#555" stroke-width="0.8"/><path d="M86.53 3.0 V4.0" stroke="#8A8A8A" stroke-width="0.7"/><path d="M89.19 2.2 V5" stroke="#555" stroke-width="0.8"/><text x="94.50" y="5.5" font-size="6.6" font-family="Liberation Sans" fill="#4A4A4A" text-anchor="middle">8</text><path d="M99.81 2.2 V5" stroke="#555" stroke-width="0.8"/><path d="M102.47 3.0 V4.0" stroke="#8A8A8A" stroke-width="0.7"/><path d="M105.12 2.2 V5" stroke="#555" stroke-width="0.8"/><path d="M107.78 3.0 V4.0" stroke="#8A8A8A" stroke-width="0.7"/><path d="M110.44 2.2 V5" stroke="#555" stroke-width="0.8"/><text x="115.75" y="5.5" font-size="6.6" font-family="Liberation Sans" fill="#4A4A4A" text-anchor="middle">6</text><path d="M121.06 2.2 V5" stroke="#555" stroke-width="0.8"/><path d="M123.72 3.0 V4.0" stroke="#8A8A8A" stroke-width="0.7"/><path d="M126.38 2.2 V5" stroke="#555" stroke-width="0.8"/><path d="M129.03 3.0 V4.0" stroke="#8A8A8A" stroke-width="0.7"/><path d="M131.69 2.2 V5" stroke="#555" stroke-width="0.8"/><text x="137.00" y="5.5" font-size="6.6" font-family="Liberation Sans" fill="#4A4A4A" text-anchor="middle">4</text><path d="M142.31 2.2 V5" stroke="#555" stroke-width="0.8"/><path d="M144.97 3.0 V4.0" stroke="#8A8A8A" stroke-width="0.7"/><path d="M147.62 2.2 V5" stroke="#555" stroke-width="0.8"/><path d="M150.28 3.0 V4.0" stroke="#8A8A8A" stroke-width="0.7"/><path d="M152.94 2.2 V5" stroke="#555" stroke-width="0.8"/><text x="158.25" y="5.5" font-size="6.6" font-family="Liberation Sans" fill="#4A4A4A" text-anchor="middle">2</text><path d="M163.56 2.2 V5" stroke="#555" stroke-width="0.8"/><path d="M166.22 3.0 V4.0" stroke="#8A8A8A" stroke-width="0.7"/><path d="M168.88 2.2 V5" stroke="#555" stroke-width="0.8"/><path d="M171.53 3.0 V4.0" stroke="#8A8A8A" stroke-width="0.7"/><path d="M174.19 2.2 V5" stroke="#555" stroke-width="0.8"/><text x="179.50" y="5.5" font-size="6.6" font-family="Liberation Sans" fill="#4A4A4A" text-anchor="middle">0</text><path d="M184.81 2.2 V5" stroke="#555" stroke-width="0.8"/><path d="M187.47 3.0 V4.0" stroke="#8A8A8A" stroke-width="0.7"/><path d="M190.12 2.2 V5" stroke="#555" stroke-width="0.8"/><path d="M192.78 3.0 V4.0" stroke="#8A8A8A" stroke-width="0.7"/><path d="M195.44 2.2 V5" stroke="#555" stroke-width="0.8"/><text x="200.75" y="5.5" font-size="6.6" font-family="Liberation Sans" fill="#4A4A4A" text-anchor="middle">2</text><path d="M206.06 2.2 V5" stroke="#555" stroke-width="0.8"/><path d="M208.72 3.0 V4.0" stroke="#8A8A8A" stroke-width="0.7"/><path d="M211.38 2.2 V5" stroke="#555" stroke-width="0.8"/><path d="M214.03 3.0 V4.0" stroke="#8A8A8A" stroke-width="0.7"/><path d="M216.69 2.2 V5" stroke="#555" stroke-width="0.8"/><text x="222.00" y="5.5" font-size="6.6" font-family="Liberation Sans" fill="#4A4A4A" text-anchor="middle">4</text><path d="M227.31 2.2 V5" stroke="#555" stroke-width="0.8"/><path d="M229.97 3.0 V4.0" stroke="#8A8A8A" stroke-width="0.7"/><path d="M232.62 2.2 V5" stroke="#555" stroke-width="0.8"/><path d="M235.28 3.0 V4.0" stroke="#8A8A8A" stroke-width="0.7"/><path d="M237.94 2.2 V5" stroke="#555" stroke-width="0.8"/><text x="243.25" y="5.5" font-size="6.6" font-family="Liberation Sans" fill="#4A4A4A" text-anchor="middle">6</text><path d="M248.56 2.2 V5" stroke="#555" stroke-width="0.8"/><path d="M251.22 3.0 V4.0" stroke="#8A8A8A" stroke-width="0.7"/><path d="M253.88 2.2 V5" stroke="#555" stroke-width="0.8"/><path d="M256.53 3.0 V4.0" stroke="#8A8A8A" stroke-width="0.7"/><path d="M259.19 2.2 V5" stroke="#555" stroke-width="0.8"/><text x="264.50" y="5.5" font-size="6.6" font-family="Liberation Sans" fill="#4A4A4A" text-anchor="middle">8</text><path d="M269.81 2.2 V5" stroke="#555" stroke-width="0.8"/><path d="M272.47 3.0 V4.0" stroke="#8A8A8A" stroke-width="0.7"/><path d="M275.12 2.2 V5" stroke="#555" stroke-width="0.8"/><path d="M277.78 3.0 V4.0" stroke="#8A8A8A" stroke-width="0.7"/><path d="M280.44 2.2 V5" stroke="#555" stroke-width="0.8"/><text x="285.75" y="5.5" font-size="6.6" font-family="Liberation Sans" fill="#4A4A4A" text-anchor="middle">10</text><path d="M291.06 2.2 V5" stroke="#555" stroke-width="0.8"/><path d="M293.72 3.0 V4.0" stroke="#8A8A8A" stroke-width="0.7"/><path d="M296.38 2.2 V5" stroke="#555" stroke-width="0.8"/><path d="M299.03 3.0 V4.0" stroke="#8A8A8A" stroke-width="0.7"/><path d="M301.69 2.2 V5" stroke="#555" stroke-width="0.8"/><text x="307.00" y="5.5" font-size="6.6" font-family="Liberation Sans" fill="#4A4A4A" text-anchor="middle">12</text><path d="M312.31 2.2 V5" stroke="#555" stroke-width="0.8"/><path d="M314.97 3.0 V4.0" stroke="#8A8A8A" stroke-width="0.7"/><path d="M317.62 2.2 V5" stroke="#555" stroke-width="0.8"/><path d="M320.28 3.0 V4.0" stroke="#8A8A8A" stroke-width="0.7"/><path d="M322.94 2.2 V5" stroke="#555" stroke-width="0.8"/><text x="328.25" y="5.5" font-size="6.6" font-family="Liberation Sans" fill="#4A4A4A" text-anchor="middle">14</text><path d="M333.56 2.2 V5" stroke="#555" stroke-width="0.8"/><path d="M336.22 3.0 V4.0" stroke="#8A8A8A" stroke-width="0.7"/><path d="M338.88 2.2 V5" stroke="#555" stroke-width="0.8"/><path d="M341.53 3.0 V4.0" stroke="#8A8A8A" stroke-width="0.7"/><path d="M344.19 2.2 V5" stroke="#555" stroke-width="0.8"/><text x="349.50" y="5.5" font-size="6.6" font-family="Liberation Sans" fill="#4A4A4A" text-anchor="middle">16</text><path d="M354.81 2.2 V5" stroke="#555" stroke-width="0.8"/></svg>
<div class="r" style="left:97.1px;top:145px;width:7px;height:202.5px;background:#FFFFFF;"></div>
<svg class="r" style="left:96.8px;top:145px;" width="7" height="203" viewBox="0 0 7 203"><path d="M2.4 3.52 H3.4" stroke="#777" stroke-width="0.7"/><path d="M1.5 6.18 H4.4" stroke="#555" stroke-width="0.8"/><path d="M2.4 8.83 H3.4" stroke="#777" stroke-width="0.7"/><path d="M1.5 11.49 H4.4" stroke="#555" stroke-width="0.8"/><text transform="translate(5.4 16.80) rotate(-90)" x="0" y="0" font-size="6.6" font-family="Liberation Sans" fill="#4A4A4A" text-anchor="middle">8</text><path d="M1.5 22.11 H4.4" stroke="#555" stroke-width="0.8"/><path d="M2.4 24.77 H3.4" stroke="#777" stroke-width="0.7"/><path d="M1.5 27.43 H4.4" stroke="#555" stroke-width="0.8"/><path d="M2.4 30.08 H3.4" stroke="#777" stroke-width="0.7"/><path d="M1.5 32.74 H4.4" stroke="#555" stroke-width="0.8"/><text transform="translate(5.4 38.05) rotate(-90)" x="0" y="0" font-size="6.6" font-family="Liberation Sans" fill="#4A4A4A" text-anchor="middle">6</text><path d="M1.5 43.36 H4.4" stroke="#555" stroke-width="0.8"/><path d="M2.4 46.02 H3.4" stroke="#777" stroke-width="0.7"/><path d="M1.5 48.68 H4.4" stroke="#555" stroke-width="0.8"/><path d="M2.4 51.33 H3.4" stroke="#777" stroke-width="0.7"/><path d="M1.5 53.99 H4.4" stroke="#555" stroke-width="0.8"/><text transform="translate(5.4 59.30) rotate(-90)" x="0" y="0" font-size="6.6" font-family="Liberation Sans" fill="#4A4A4A" text-anchor="middle">4</text><path d="M1.5 64.61 H4.4" stroke="#555" stroke-width="0.8"/><path d="M2.4 67.27 H3.4" stroke="#777" stroke-width="0.7"/><path d="M1.5 69.93 H4.4" stroke="#555" stroke-width="0.8"/><path d="M2.4 72.58 H3.4" stroke="#777" stroke-width="0.7"/><path d="M1.5 75.24 H4.4" stroke="#555" stroke-width="0.8"/><text transform="translate(5.4 80.55) rotate(-90)" x="0" y="0" font-size="6.6" font-family="Liberation Sans" fill="#4A4A4A" text-anchor="middle">2</text><path d="M1.5 85.86 H4.4" stroke="#555" stroke-width="0.8"/><path d="M2.4 88.52 H3.4" stroke="#777" stroke-width="0.7"/><path d="M1.5 91.18 H4.4" stroke="#555" stroke-width="0.8"/><path d="M2.4 93.83 H3.4" stroke="#777" stroke-width="0.7"/><path d="M1.5 96.49 H4.4" stroke="#555" stroke-width="0.8"/><text transform="translate(5.4 101.80) rotate(-90)" x="0" y="0" font-size="6.6" font-family="Liberation Sans" fill="#4A4A4A" text-anchor="middle">0</text><path d="M1.5 107.11 H4.4" stroke="#555" stroke-width="0.8"/><path d="M2.4 109.77 H3.4" stroke="#777" stroke-width="0.7"/><path d="M1.5 112.43 H4.4" stroke="#555" stroke-width="0.8"/><path d="M2.4 115.08 H3.4" stroke="#777" stroke-width="0.7"/><path d="M1.5 117.74 H4.4" stroke="#555" stroke-width="0.8"/><text transform="translate(5.4 123.05) rotate(-90)" x="0" y="0" font-size="6.6" font-family="Liberation Sans" fill="#4A4A4A" text-anchor="middle">2</text><path d="M1.5 128.36 H4.4" stroke="#555" stroke-width="0.8"/><path d="M2.4 131.02 H3.4" stroke="#777" stroke-width="0.7"/><path d="M1.5 133.68 H4.4" stroke="#555" stroke-width="0.8"/><path d="M2.4 136.33 H3.4" stroke="#777" stroke-width="0.7"/><path d="M1.5 138.99 H4.4" stroke="#555" stroke-width="0.8"/><text transform="translate(5.4 144.30) rotate(-90)" x="0" y="0" font-size="6.6" font-family="Liberation Sans" fill="#4A4A4A" text-anchor="middle">4</text><path d="M1.5 149.61 H4.4" stroke="#555" stroke-width="0.8"/><path d="M2.4 152.27 H3.4" stroke="#777" stroke-width="0.7"/><path d="M1.5 154.93 H4.4" stroke="#555" stroke-width="0.8"/><path d="M2.4 157.58 H3.4" stroke="#777" stroke-width="0.7"/><path d="M1.5 160.24 H4.4" stroke="#555" stroke-width="0.8"/><text transform="translate(5.4 165.55) rotate(-90)" x="0" y="0" font-size="6.6" font-family="Liberation Sans" fill="#4A4A4A" text-anchor="middle">6</text><path d="M1.5 170.86 H4.4" stroke="#555" stroke-width="0.8"/><path d="M2.4 173.52 H3.4" stroke="#777" stroke-width="0.7"/><path d="M1.5 176.18 H4.4" stroke="#555" stroke-width="0.8"/><path d="M2.4 178.83 H3.4" stroke="#777" stroke-width="0.7"/><path d="M1.5 181.49 H4.4" stroke="#555" stroke-width="0.8"/><text transform="translate(5.4 186.80) rotate(-90)" x="0" y="0" font-size="6.6" font-family="Liberation Sans" fill="#4A4A4A" text-anchor="middle">8</text><path d="M1.5 192.11 H4.4" stroke="#555" stroke-width="0.8"/><path d="M2.4 194.77 H3.4" stroke="#777" stroke-width="0.7"/><path d="M1.5 197.43 H4.4" stroke="#555" stroke-width="0.8"/><path d="M2.4 200.08 H3.4" stroke="#777" stroke-width="0.7"/></svg>
<svg width="0" height="0" style="position:absolute"><defs><linearGradient id="sky" x1="0" y1="0" x2="0" y2="1"><stop offset="0" stop-color="#EEF0F0"/><stop offset="0.6" stop-color="#D6D6D2"/><stop offset="1" stop-color="#A89E8C"/></linearGradient><pattern id="plaid" x="0" y="0" width="4.2" height="4.2" patternUnits="userSpaceOnUse" patternTransform="rotate(3)"><rect width="4.2" height="4.2" fill="#231D2A"/><rect x="0" y="0" width="1.6" height="1.6" fill="#D6C8CE"/><rect x="2.1" y="0.3" width="1.6" height="1.1" fill="#A04858"/><rect x="0.3" y="2.1" width="1.1" height="1.6" fill="#7A3A4A"/></pattern><filter id="thd" color-interpolation-filters="sRGB"><feComponentTransfer><feFuncR type="gamma" amplitude="1" exponent="1.8" offset="0"/><feFuncG type="gamma" amplitude="1" exponent="1.8" offset="0"/><feFuncB type="gamma" amplitude="1" exponent="1.8" offset="0"/></feComponentTransfer></filter><filter id="soft" x="270" y="130" width="300" height="240" filterUnits="userSpaceOnUse"><feGaussianBlur stdDeviation="0.45"/></filter><filter id="flw" x="280" y="200" width="290" height="160" filterUnits="userSpaceOnUse" color-interpolation-filters="sRGB"><feTurbulence type="fractalNoise" baseFrequency="0.13" numOctaves="3" seed="11" result="n"/><feColorMatrix in="n" type="matrix" values="4.0 0 0 0 -1.0  4.0 0 0 0 -1.0  4.0 0 0 0 -1.0  0 0 0 0 1" result="k"/><feColorMatrix in="k" type="matrix" values="0.78 0 0 0 0.17  0 0.64 0 0 0.19  0 0 -0.03 0 0.07  0 0 0 0 1" result="c"/><feComposite in="c" in2="SourceGraphic" operator="in"/></filter><clipPath id="pc"><rect transform="matrix(0.6428,-0.7660,0.7660,0.6428,0,0)" x="8.05" y="380.85" width="98.20" height="24.90" rx="12.45" fill="#000"/><rect transform="matrix(0.6428,-0.7660,0.7660,0.6428,0,0)" x="36.15" y="408.55" width="117.30" height="24.90" rx="12.45" fill="#000"/><rect transform="matrix(0.6428,-0.7660,0.7660,0.6428,0,0)" x="25.85" y="437.15" width="119.60" height="24.90" rx="12.45" fill="#000"/><rect transform="matrix(0.6428,-0.7660,0.7660,0.6428,0,0)" x="-6.85" y="465.75" width="129.30" height="24.90" rx="12.45" fill="#000"/><rect transform="matrix(0.6428,-0.7660,0.7660,0.6428,0,0)" x="28.55" y="494.55" width="134.90" height="24.90" rx="12.45" fill="#000"/><rect transform="matrix(0.6428,-0.7660,0.7660,0.6428,0,0)" x="7.75" y="520.95" width="128.70" height="24.90" rx="12.45" fill="#000"/><rect transform="matrix(0.6428,-0.7660,0.7660,0.6428,0,0)" x="53.05" y="550.05" width="130.40" height="24.90" rx="12.45" fill="#000"/></clipPath><g id="photo"><g clip-path="url(#pc)"><g filter="url(#soft)">
<rect x="280" y="140" width="290" height="220" fill="#2F381C"/>
<rect x="280" y="140" width="290" height="100" fill="url(#sky)"/>
<g stroke="#F4F4F4" stroke-width="1.6" fill="none" opacity="0.95">
<path d="M290 214 L480 162"/><path d="M290 222 L500 166"/><path d="M300 206 L470 160"/><path d="M300 197 L470 150"/><path d="M310 188 L470 142"/><path d="M420 206 L540 176"/><path d="M440 212 L545 186"/><path d="M460 200 L545 180"/>
</g>
<g stroke="#A49C8C" stroke-width="1" fill="none" opacity="0.9">
<path d="M290 218 L490 164"/><path d="M290 226 L505 170"/><path d="M300 210 L475 162"/><path d="M300 201 L470 154"/><path d="M310 192 L470 146"/><path d="M300 232 L510 180"/><path d="M420 210 L545 180"/><path d="M440 216 L545 190"/>
</g>
<path d="M290 214 L480 200 L480 232 L290 242Z" fill="#8A7C64" opacity="0.55"/>
<g stroke="#6E5E46" stroke-width="1.1" fill="none" opacity="0.9"><path d="M290 218 L480 206"/><path d="M290 224 L480 212"/><path d="M300 230 L480 219"/><path d="M330 236 L350 208"/><path d="M420 226 L440 204"/><path d="M455 224 L470 204"/><path d="M395 228 L410 206"/></g>
<g stroke="#B49C74" fill="none">
<path d="M346 176 L444 181" stroke-width="5.5"/>
<path d="M346 178.5 L444 183.5" stroke="#7E6A4A" stroke-width="1.3"/>
<path d="M346 174 L444 179" stroke="#D6C6A0" stroke-width="1.2"/>
<path d="M392 162 L432 160" stroke-width="3"/>
<path d="M300 216 L350 210" stroke-width="2.5"/>
<path d="M420 210 L470 204" stroke-width="2.5"/>
</g>
<g stroke="#A68E64" fill="none">
<path d="M374 193 L375 224" stroke-width="4.2"/>
<path d="M402.6 176.4 L370.7 221" stroke-width="3.2"/>
<path d="M417 189.6 L393.8 223" stroke-width="2.6"/>
<path d="M358 169 L372 222" stroke-width="3.2"/>
<path d="M318 212 L400 196" stroke-width="2.2"/>
<path d="M312 222 L395 206" stroke-width="1.8"/>
<path d="M330 200 L345 186" stroke-width="1.5"/>
<path d="M420 190 L470 178" stroke-width="2"/>
<path d="M440 198 L428 226" stroke-width="2"/>
<path d="M480 208 L495 197" stroke-width="1.6"/>
<path d="M534 228 L546 220" stroke-width="2.5"/>
</g>
<g stroke="#6A6A66" stroke-width="1" fill="none">
<path d="M490 222 L492 200"/><path d="M484 222 L486 204"/><path d="M318 225 L322 205"/><path d="M338 224 L342 204"/>
</g>
<path d="M337.7 184 L346.5 180.8 L344 191.8Z" fill="#1E1E1E"/>
<path d="M409 169 L413.6 168.7 L412 173Z" fill="#333"/>
<g opacity="0.8">
<rect x="300" y="225" width="62" height="8" fill="#A09A90"/>
<rect x="306" y="226" width="3" height="6" fill="#E8E8E8"/><rect x="316" y="227" width="3" height="5" fill="#D8D8D8"/><rect x="325" y="226" width="4" height="6" fill="#E0B0C0"/><rect x="336" y="227" width="4" height="5" fill="#E2E2E2"/><rect x="348" y="228" width="3" height="4" fill="#7090C0"/>
</g>
<path d="M280 238 L330 234 L374 227 L420 226 L476 224.5 L532 229 L570 230 V360 H280Z" fill="#3A4220"/>
<path d="M280 238 L330 234 L374 227 L420 226 L476 224.5 L532 229 L570 230 V360 H280Z" fill="#fff" filter="url(#flw)"/>
<path d="M340 268 L400 258 L395 345 L340 345Z" fill="#17200F" opacity="0.88"/><ellipse cx="373" cy="292" rx="3" ry="2" fill="#E0C000"/><ellipse cx="366" cy="312" rx="2.5" ry="1.6" fill="#E0C000"/><ellipse cx="371" cy="313" rx="2" ry="1.5" fill="#E0C000"/>
<path d="M448 292 L470 290 L500 302 L480 345 L448 345Z" fill="#121810" opacity="0.9"/>
<ellipse cx="508" cy="262" rx="22" ry="18" fill="#F0D21A" opacity="0.5"/>
<ellipse cx="392" cy="246" rx="18" ry="12" fill="#F0D21A" opacity="0.45"/>
<ellipse cx="468" cy="240" rx="16" ry="10" fill="#F0D21A" opacity="0.45"/>
<ellipse cx="520" cy="240" rx="14" ry="8" fill="#F0D21A" opacity="0.4"/>
<path d="M391 345 L393 285 Q395 266 412 264 L446 262 Q457 268 456 290 L446 345Z" fill="url(#plaid)"/>
<path d="M450 285 L453 254 Q458 248 463 254 L462 290Z" fill="url(#plaid)"/>
<path d="M412 236 Q414 223 426 223 Q438 223 442 236 L447 252 Q450 268 443 278 L418 276 Q404 270 401 256 Q402 246 412 236Z" fill="#1E2B52"/>
<ellipse cx="427.5" cy="246" rx="9" ry="11" fill="#C8977A"/>
<path d="M418 242 H437" stroke="#1A1A1A" stroke-width="1.4"/>
<path d="M420 251 Q427 255 434 251" fill="none" stroke="#8A4A40" stroke-width="0.9"/>
<path d="M545 220 Q552 222 556 230 L556 244 L546 240 Q543 230 545 220Z" fill="#121210"/>
</g></g></g><g id="pillsolid"><rect transform="matrix(0.6428,-0.7660,0.7660,0.6428,0,0)" x="8.05" y="380.85" width="98.20" height="24.90" rx="12.45" fill="currentColor"/><rect transform="matrix(0.6428,-0.7660,0.7660,0.6428,0,0)" x="36.15" y="408.55" width="117.30" height="24.90" rx="12.45" fill="currentColor"/><rect transform="matrix(0.6428,-0.7660,0.7660,0.6428,0,0)" x="25.85" y="437.15" width="119.60" height="24.90" rx="12.45" fill="currentColor"/><rect transform="matrix(0.6428,-0.7660,0.7660,0.6428,0,0)" x="-6.85" y="465.75" width="129.30" height="24.90" rx="12.45" fill="currentColor"/><rect transform="matrix(0.6428,-0.7660,0.7660,0.6428,0,0)" x="28.55" y="494.55" width="134.90" height="24.90" rx="12.45" fill="currentColor"/><rect transform="matrix(0.6428,-0.7660,0.7660,0.6428,0,0)" x="7.75" y="520.95" width="128.70" height="24.90" rx="12.45" fill="currentColor"/><rect transform="matrix(0.6428,-0.7660,0.7660,0.6428,0,0)" x="53.05" y="550.05" width="130.40" height="24.90" rx="12.45" fill="currentColor"/></g></defs></svg>
<div class="r" style="left:173.5px;top:145px;width:360px;height:202.6px;background:#5E5A4F;"></div>
<svg class="r" style="left:0;top:0" width="768" height="409" viewBox="0 0 768 409"><use href="#photo"/></svg>
<div class="r" style="left:15px;top:87.0px;width:55.6px;height:31.8px;background:#D0D0D0;"></div>
<svg class="r" style="left:15.5px;top:87.6px;overflow:hidden" width="54.5" height="30.6" viewBox="0 0 54.5 30.6"><rect width="54.5" height="30.6" fill="#E8BE00"/><g transform="scale(0.15139) translate(-173.5 -145)"><g filter="url(#thd)"><use href="#photo"/></g></g></svg>
<span class="t" style="left:0px;width:12px;text-align:right;top:85.00px;font-size:9px;color:#555;">4</span>
<div class="r" style="left:15px;top:129.70000000000002px;width:55.6px;height:31.8px;background:#D0D0D0;"></div>
<svg class="r" style="left:15.5px;top:130.3px;overflow:hidden" width="54.5" height="30.6" viewBox="0 0 54.5 30.6"><rect width="54.5" height="30.6" fill="#FFFFFF"/><g transform="scale(0.15139) translate(-173.5 -145)"><g style="color:#5B9BD5"><use href="#pillsolid"/></g></g></svg>
<span class="t" style="left:0px;width:12px;text-align:right;top:127.70px;font-size:9px;color:#555;">5</span>
<div class="r" style="left:15px;top:172.4px;width:55.6px;height:31.8px;background:#D0D0D0;"></div>
<svg class="r" style="left:15.5px;top:173.0px;overflow:hidden" width="54.5" height="30.6" viewBox="0 0 54.5 30.6"><rect width="54.5" height="30.6" fill="#FFFFFF"/><g transform="scale(0.15139) translate(-173.5 -145)"><g style="color:#EDD3A2"><use href="#pillsolid"/></g></g></svg>
<span class="t" style="left:0px;width:12px;text-align:right;top:170.40px;font-size:9px;color:#555;">6</span>
<div class="r" style="left:15px;top:215.1px;width:55.6px;height:31.8px;background:#D0D0D0;"></div>
<svg class="r" style="left:15.5px;top:215.7px;overflow:hidden" width="54.5" height="30.6" viewBox="0 0 54.5 30.6"><rect width="54.5" height="30.6" fill="#FFFFFF"/><g transform="scale(0.15139) translate(-173.5 -145)"><g filter="url(#thd)"><use href="#photo"/></g></g></svg>
<span class="t" style="left:0px;width:12px;text-align:right;top:213.10px;font-size:9px;color:#555;">7</span>
<div class="r" style="left:15px;top:257.79999999999995px;width:55.6px;height:31.8px;background:#D0D0D0;"></div>
<svg class="r" style="left:15.5px;top:258.4px;overflow:hidden" width="54.5" height="30.6" viewBox="0 0 54.5 30.6"><rect width="54.5" height="30.6" fill="#E8BE00"/><g transform="scale(0.15139) translate(-173.5 -145)"><g filter="url(#thd)"><use href="#photo"/></g></g></svg>
<span class="t" style="left:0px;width:12px;text-align:right;top:255.80px;font-size:9px;color:#555;">8</span>
<div class="r" style="left:13.3px;top:299.5px;width:58.7px;height:34px;background:#D24726;"></div>
<div class="r" style="left:14.5px;top:300.6px;width:56.5px;height:31.8px;background:#F4F4F4;"></div>
<svg class="r" style="left:15.5px;top:301.1px;overflow:hidden" width="54.5" height="30.6" viewBox="0 0 54.5 30.6"><rect width="54.5" height="30.6" fill="#5E5A4F"/><g transform="scale(0.15139) translate(-173.5 -145)"><g filter="url(#thd)"><use href="#photo"/></g></g></svg>
<span class="t" style="left:0px;width:12px;text-align:right;top:298.50px;font-size:9px;color:#D24726;">9</span>
<div class="r" style="left:15px;top:343.2px;width:55.6px;height:31.8px;background:#D0D0D0;"></div>
<svg class="r" style="left:15.5px;top:343.8px;overflow:hidden" width="54.5" height="30.6" viewBox="0 0 54.5 30.6"><rect width="54.5" height="30.6" fill="#E8BE00"/><g transform="scale(0.15139) translate(-173.5 -145)"><g filter="url(#thd)"><use href="#photo"/></g></g><rect x="4.3" y="19" width="7" height="2.8" fill="#2A2410"/><rect x="11.8" y="20" width="10.8" height="1.2" fill="#5A4A20"/><rect x="9.3" y="22.4" width="13.3" height="0.9" fill="#C85A20"/><rect x="11.8" y="24.5" width="10.8" height="1.1" fill="#3A3418"/></svg>
<span class="t" style="left:0px;width:12px;text-align:right;top:341.20px;font-size:9px;color:#555;">10</span>
<div class="r" style="left:15px;top:385.9px;width:55.6px;height:31.8px;background:#D0D0D0;"></div>
<svg class="r" style="left:15.5px;top:386.5px;overflow:hidden" width="54.5" height="9.0" viewBox="0 0 54.5 9.0"><rect width="54.5" height="30.6" fill="#5E5A4F"/><g transform="scale(0.15139) translate(-173.5 -145)"><g filter="url(#thd)"><use href="#photo"/></g></g></svg>
<span class="t" style="left:0px;width:12px;text-align:right;top:383.90px;font-size:9px;color:#555;">11</span>
<div class="r" style="left:608.8px;top:84px;width:159.2px;height:312px;background:#E6E6E6;"></div>
<span class="t" style="left:615.6px;top:94.53px;font-size:11.55px;color:#D4512F;font-weight:normal;-webkit-text-stroke:0;">Format Background</span>
<svg class="r" style="left:746.5px;top:96px;" width="4" height="3" viewBox="0 0 4 3"><path d="M0 0 H4 L2 2.3Z" fill="#555"/></svg>
<svg class="r" style="left:755px;top:94px;" width="7" height="7" viewBox="0 0 7 7"><path d="M0.5 0.5 L6 6 M6 0.5 L0.5 6" stroke="#555" stroke-width="0.9"/></svg>
<svg class="r" style="left:617px;top:107px;" width="15" height="15" viewBox="0 0 15 15"><path d="M2 7.3 L7.3 2.6 L12 6.8 L7.3 13.4Z" fill="#fff" stroke="#D24726" stroke-width="1.3" stroke-linejoin="round"/><path d="M5.2 4.6 Q5 1 7.5 1.3 Q8.6 1.6 8.2 4.2" fill="none" stroke="#D24726" stroke-width="0.9"/><circle cx="7.4" cy="5" r="0.7" fill="#D24726"/><path d="M12 6.8 Q14.6 7.6 13.6 11.6" fill="none" stroke="#D24726" stroke-width="1.5"/></svg>
<svg class="r" style="left:615px;top:125px;" width="146" height="8" viewBox="0 0 146 8"><path d="M0.5 6.2 H6.8 L10.1 2.6 L13.4 6.2 H145.5" fill="none" stroke="#CDCDCD" stroke-width="0.8"/></svg>
<svg class="r" style="left:619.5px;top:138px;" width="4" height="4" viewBox="0 0 4 4"><path d="M3.5 0 V3.5 H0Z" fill="#444"/></svg>
<span class="t" style="left:628.0px;top:136.83px;font-size:6.78px;color:#D24726;font-weight:bold;transform:scaleX(0.8850);transform-origin:0 0;">Fill</span>
<svg class="r" style="left:627.5px;top:152.6px;" width="8" height="8" viewBox="0 0 8 8"><circle cx="4" cy="4" r="3.2" fill="#fff" stroke="#8A8A8A" stroke-width="0.7"/><circle cx="4" cy="4" r="1.3" fill="#333"/></svg>
<span class="t" style="left:638.1px;top:152.87px;font-size:7.84px;color:#444;font-weight:normal;transform:scaleX(0.8850);transform-origin:0 0;text-decoration:none"><u>S</u>olid fill</span>
<svg class="r" style="left:627.5px;top:164.6px;" width="8" height="8" viewBox="0 0 8 8"><circle cx="4" cy="4" r="3.2" fill="#fff" stroke="#8A8A8A" stroke-width="0.7"/></svg>
<span class="t" style="left:638.1px;top:164.94px;font-size:7.64px;color:#444;font-weight:normal;transform:scaleX(0.8850);transform-origin:0 0;text-decoration:none"><u>G</u>radient fill</span>
<svg class="r" style="left:627.5px;top:177.3px;" width="8" height="8" viewBox="0 0 8 8"><circle cx="4" cy="4" r="3.2" fill="#fff" stroke="#8A8A8A" stroke-width="0.7"/></svg>
<span class="t" style="left:638.1px;top:177.62px;font-size:7.70px;color:#444;font-weight:normal;transform:scaleX(0.8850);transform-origin:0 0;text-decoration:none"><u>P</u>icture or texture fill</span>
<svg class="r" style="left:627.5px;top:189.4px;" width="8" height="8" viewBox="0 0 8 8"><circle cx="4" cy="4" r="3.2" fill="#fff" stroke="#8A8A8A" stroke-width="0.7"/></svg>
<span class="t" style="left:638.1px;top:189.70px;font-size:7.75px;color:#444;font-weight:normal;transform:scaleX(0.8850);transform-origin:0 0;text-decoration:none">P<u>a</u>ttern fill</span>
<div class="r" style="left:628.3px;top:203.7px;width:7px;height:7px;background:#FFFFFF;box-sizing:border-box;border:0.8px solid #8A8A8A;"></div>
<span class="t" style="left:638.1px;top:203.84px;font-size:7.65px;color:#444;font-weight:normal;transform:scaleX(0.8850);transform-origin:0 0;"><u>H</u>ide background graphics</span>
<div class="r" style="left:628px;top:216px;width:133px;height:0.7px;background:#DCDCDC;"></div>
<span class="t" style="left:633.9px;top:225.26px;font-size:7.57px;color:#444;font-weight:normal;transform:scaleX(0.8850);transform-origin:0 0;"><u>C</u>olor</span>
<span class="t" style="left:633.9px;top:242.26px;font-size:7.57px;color:#444;font-weight:normal;transform:scaleX(0.8850);transform-origin:0 0;"><u>T</u>ransparency</span>
<div class="r" style="left:724.2px;top:221px;width:24.3px;height:14.5px;background:#F5C0A6;box-sizing:border-box;border:0.8px solid #E58A66;"></div>
<svg class="r" style="left:728px;top:223px;" width="10" height="10" viewBox="0 0 10 10"><path d="M2 4.5 L5 1.5 L8 4.5 L5 7.5Z" fill="#fff" stroke="#444" stroke-width="0.7"/><path d="M8 4.5 Q9.3 6 8.8 7" fill="none" stroke="#444" stroke-width="0.6"/><rect x="0.5" y="8.2" width="9" height="1.5" fill="#5E5A4F"/></svg>
<svg class="r" style="left:741px;top:227px;" width="4" height="3" viewBox="0 0 4 3"><path d="M0 0 H4 L2 2.3Z" fill="#333"/></svg>
<div class="r" style="left:615.5px;top:372.4px;width:45.2px;height:13.9px;background:#FDFDFD;box-sizing:border-box;border:0.8px solid #ADADAD;"></div>
<span class="t" style="left:620.8px;top:376.14px;font-size:7.94px;color:#444;font-weight:normal;transform:scaleX(0.8850);transform-origin:0 0;">Apply to All</span>
<div class="r" style="left:665.3px;top:372.4px;width:63.7px;height:13.9px;background:#FDFDFD;box-sizing:border-box;border:0.8px solid #ADADAD;"></div>
<span class="t" style="left:670.4px;top:376.33px;font-size:7.37px;color:#444;font-weight:normal;transform:scaleX(0.8850);transform-origin:0 0;">Reset <u>B</u>ackground</span>
<div class="r" style="left:667.5px;top:234.5px;width:100px;height:145px;background:rgba(0,0,0,0.08);"></div>
<div class="r" style="left:669.4px;top:235.5px;width:96px;height:142px;background:#FFFFFF;box-sizing:border-box;border:0.8px solid #C6C6C6;"></div>
<div class="r" style="left:671.4px;top:238px;width:8.3px;height:9.6px;background:#FFFFFF;box-sizing:border-box;border:0.7px solid #E0E0E0;"></div>
<span class="t" style="left:682.7px;top:238.57px;font-size:7.85px;color:#444;font-weight:normal;transform:scaleX(0.8850);transform-origin:0 0;"><u>A</u>utomatic</span>
<div class="r" style="left:670.2px;top:248.8px;width:94.4px;height:11px;background:#E8E8E8;"></div>
<span class="t" style="left:674.4px;top:250.88px;font-size:7.22px;color:#555;font-weight:bold;transform:scaleX(0.8850);transform-origin:0 0;">Theme Colors</span>
<div class="r" style="left:671.2px;top:262.2px;width:6.6px;height:6.6px;background:#FFFFFF;box-sizing:border-box;border:0.5px solid #E2E2E2;"></div>
<div class="r" style="left:671.2px;top:272.2px;width:6.6px;height:7.2px;background:#F2F2F2;"></div>
<div class="r" style="left:671.2px;top:279.3px;width:6.6px;height:7.2px;background:#D9D9D9;"></div>
<div class="r" style="left:671.2px;top:286.4px;width:6.6px;height:7.2px;background:#BFBFBF;"></div>
<div class="r" style="left:671.2px;top:293.5px;width:6.6px;height:7.2px;background:#A6A6A6;"></div>
<div class="r" style="left:671.2px;top:300.59999999999997px;width:6.6px;height:7.2px;background:#808080;"></div>
<div class="r" style="left:671.2px;top:324.8px;width:6.6px;height:6.6px;background:#C00000;"></div>
<div class="r" style="left:680.72px;top:262.2px;width:6.6px;height:6.6px;background:#000000;"></div>
<div class="r" style="left:680.72px;top:272.2px;width:6.6px;height:7.2px;background:#808080;"></div>
<div class="r" style="left:680.72px;top:279.3px;width:6.6px;height:7.2px;background:#595959;"></div>
<div class="r" style="left:680.72px;top:286.4px;width:6.6px;height:7.2px;background:#404040;"></div>
<div class="r" style="left:680.72px;top:293.5px;width:6.6px;height:7.2px;background:#262626;"></div>
<div class="r" style="left:680.72px;top:300.59999999999997px;width:6.6px;height:7.2px;background:#0D0D0D;"></div>
<div class="r" style="left:680.72px;top:324.8px;width:6.6px;height:6.6px;background:#FF0000;"></div>
<div class="r" style="left:690.24px;top:262.2px;width:6.6px;height:6.6px;background:#E7E6E6;"></div>
<div class="r" style="left:690.24px;top:272.2px;width:6.6px;height:7.2px;background:#D0CECE;"></div>
<div class="r" style="left:690.24px;top:279.3px;width:6.6px;height:7.2px;background:#AEAAAA;"></div>
<div class="r" style="left:690.24px;top:286.4px;width:6.6px;height:7.2px;background:#757171;"></div>
<div class="r" style="left:690.24px;top:293.5px;width:6.6px;height:7.2px;background:#3A3838;"></div>
<div class="r" style="left:690.24px;top:300.59999999999997px;width:6.6px;height:7.2px;background:#171616;"></div>
<div class="r" style="left:690.24px;top:324.8px;width:6.6px;height:6.6px;background:#FFC000;"></div>
<div class="r" style="left:699.76px;top:262.2px;width:6.6px;height:6.6px;background:#44546A;"></div>
<div class="r" style="left:699.76px;top:272.2px;width:6.6px;height:7.2px;background:#D6DCE5;"></div>
<div class="r" style="left:699.76px;top:279.3px;width:6.6px;height:7.2px;background:#ADB9CA;"></div>
<div class="r" style="left:699.76px;top:286.4px;width:6.6px;height:7.2px;background:#8497B0;"></div>
<div class="r" style="left:699.76px;top:293.5px;width:6.6px;height:7.2px;background:#333F50;"></div>
<div class="r" style="left:699.76px;top:300.59999999999997px;width:6.6px;height:7.2px;background:#222A35;"></div>
<div class="r" style="left:699.76px;top:324.8px;width:6.6px;height:6.6px;background:#FFFF00;"></div>
<div class="r" style="left:709.28px;top:262.2px;width:6.6px;height:6.6px;background:#5B9BD5;"></div>
<div class="r" style="left:709.28px;top:272.2px;width:6.6px;height:7.2px;background:#DEEBF7;"></div>
<div class="r" style="left:709.28px;top:279.3px;width:6.6px;height:7.2px;background:#BDD7EE;"></div>
<div class="r" style="left:709.28px;top:286.4px;width:6.6px;height:7.2px;background:#9DC3E6;"></div>
<div class="r" style="left:709.28px;top:293.5px;width:6.6px;height:7.2px;background:#2E75B6;"></div>
<div class="r" style="left:709.28px;top:300.59999999999997px;width:6.6px;height:7.2px;background:#1F4E79;"></div>
<div class="r" style="left:709.28px;top:324.8px;width:6.6px;height:6.6px;background:#92D050;"></div>
<div class="r" style="left:718.8px;top:262.2px;width:6.6px;height:6.6px;background:#ED7D31;"></div>
<div class="r" style="left:718.8px;top:272.2px;width:6.6px;height:7.2px;background:#FBE5D6;"></div>
<div class="r" style="left:718.8px;top:279.3px;width:6.6px;height:7.2px;background:#F8CBAD;"></div>
<div class="r" style="left:718.8px;top:286.4px;width:6.6px;height:7.2px;background:#F4B183;"></div>
<div class="r" style="left:718.8px;top:293.5px;width:6.6px;height:7.2px;background:#C55A11;"></div>
<div class="r" style="left:718.8px;top:300.59999999999997px;width:6.6px;height:7.2px;background:#843C0C;"></div>
<div class="r" style="left:718.8px;top:324.8px;width:6.6px;height:6.6px;background:#00B050;"></div>
<div class="r" style="left:728.32px;top:262.2px;width:6.6px;height:6.6px;background:#A5A5A5;"></div>
<div class="r" style="left:728.32px;top:272.2px;width:6.6px;height:7.2px;background:#EDEDED;"></div>
<div class="r" style="left:728.32px;top:279.3px;width:6.6px;height:7.2px;background:#DBDBDB;"></div>
<div class="r" style="left:728.32px;top:286.4px;width:6.6px;height:7.2px;background:#C9C9C9;"></div>
<div class="r" style="left:728.32px;top:293.5px;width:6.6px;height:7.2px;background:#7B7B7B;"></div>
<div class="r" style="left:728.32px;top:300.59999999999997px;width:6.6px;height:7.2px;background:#525252;"></div>
<div class="r" style="left:728.32px;top:324.8px;width:6.6px;height:6.6px;background:#00B0F0;"></div>
<div class="r" style="left:737.84px;top:262.2px;width:6.6px;height:6.6px;background:#FFC000;"></div>
<div class="r" style="left:737.84px;top:272.2px;width:6.6px;height:7.2px;background:#FFF2CC;"></div>
<div class="r" style="left:737.84px;top:279.3px;width:6.6px;height:7.2px;background:#FFE699;"></div>
<div class="r" style="left:737.84px;top:286.4px;width:6.6px;height:7.2px;background:#FFD966;"></div>
<div class="r" style="left:737.84px;top:293.5px;width:6.6px;height:7.2px;background:#BF9000;"></div>
<div class="r" style="left:737.84px;top:300.59999999999997px;width:6.6px;height:7.2px;background:#7F6000;"></div>
<div class="r" style="left:737.84px;top:324.8px;width:6.6px;height:6.6px;background:#0070C0;"></div>
<div class="r" style="left:747.36px;top:262.2px;width:6.6px;height:6.6px;background:#4472C4;"></div>
<div class="r" style="left:747.36px;top:272.2px;width:6.6px;height:7.2px;background:#DAE3F3;"></div>
<div class="r" style="left:747.36px;top:279.3px;width:6.6px;height:7.2px;background:#B4C7E7;"></div>
<div class="r" style="left:747.36px;top:286.4px;width:6.6px;height:7.2px;background:#8FAADC;"></div>
<div class="r" style="left:747.36px;top:293.5px;width:6.6px;height:7.2px;background:#2F5597;"></div>
<div class="r" style="left:747.36px;top:300.59999999999997px;width:6.6px;height:7.2px;background:#203864;"></div>
<div class="r" style="left:747.36px;top:324.8px;width:6.6px;height:6.6px;background:#002060;"></div>
<div class="r" style="left:756.88px;top:262.2px;width:6.6px;height:6.6px;background:#70AD47;"></div>
<div class="r" style="left:756.88px;top:272.2px;width:6.6px;height:7.2px;background:#E2F0D9;"></div>
<div class="r" style="left:756.88px;top:279.3px;width:6.6px;height:7.2px;background:#C5E0B4;"></div>
<div class="r" style="left:756.88px;top:286.4px;width:6.6px;height:7.2px;background:#A9D18E;"></div>
<div class="r" style="left:756.88px;top:293.5px;width:6.6px;height:7.2px;background:#548235;"></div>
<div class="r" style="left:756.88px;top:300.59999999999997px;width:6.6px;height:7.2px;background:#385723;"></div>
<div class="r" style="left:756.88px;top:324.8px;width:6.6px;height:6.6px;background:#7030A0;"></div>
<div class="r" style="left:670.2px;top:312.5px;width:94.4px;height:9.5px;background:#E8E8E8;"></div>
<span class="t" style="left:673.8px;top:313.70px;font-size:7.15px;color:#555;font-weight:bold;transform:scaleX(0.8850);transform-origin:0 0;">Standard Colors</span>
<div class="r" style="left:670.2px;top:334.5px;width:94.4px;height:10.5px;background:#E8E8E8;"></div>
<span class="t" style="left:674.3px;top:336.09px;font-size:7.19px;color:#555;font-weight:bold;transform:scaleX(0.8850);transform-origin:0 0;">Recent Colors</span>
<div class="r" style="left:671.2px;top:347.1px;width:6.6px;height:6.6px;background:#FFD400;"></div>
<div class="r" style="left:680.7px;top:347.1px;width:6.6px;height:6.6px;background:#D8D0C6;"></div>
<div class="r" style="left:690.2px;top:347.1px;width:6.6px;height:6.6px;background:#8C7458;"></div>
<div class="r" style="left:699.7px;top:347.1px;width:6.6px;height:6.6px;background:#0F1A30;"></div>
<div class="r" style="left:709.2px;top:347.1px;width:6.6px;height:6.6px;background:#28301E;"></div>
<div class="r" style="left:717.9px;top:346.3px;width:8.2px;height:8.2px;background:#F08A5D;"></div>
<div class="r" style="left:718.9px;top:347.3px;width:6.2px;height:6.2px;background:#5E5A4F;"></div>
<div class="r" style="left:728.2px;top:347.1px;width:6.6px;height:6.6px;background:#E6C000;"></div>
<svg class="r" style="left:670.5px;top:356px;" width="9" height="9" viewBox="0 0 9 9"><circle cx="4.5" cy="4.5" r="4" fill="#F7F7F7"/><path d="M4.5 4.5 L4.5 0.5 A4 4 0 0 1 8.3 3.3Z" fill="#F3A33B"/><path d="M4.5 4.5 L8.3 3.3 A4 4 0 0 1 6.8 7.8Z" fill="#5B9BD5"/><path d="M4.5 4.5 L6.8 7.8 A4 4 0 0 1 1.5 7.2Z" fill="#3D7CC2"/><path d="M4.5 4.5 L1.5 7.2 A4 4 0 0 1 0.6 3.5Z" fill="#70AD47"/><path d="M4.5 4.5 L0.6 3.5 A4 4 0 0 1 4.5 0.5Z" fill="#E8503A"/><circle cx="4.5" cy="4.5" r="1.3" fill="#fff"/></svg>
<span class="t" style="left:682.8px;top:357.21px;font-size:7.45px;color:#444;font-weight:normal;transform:scaleX(0.8850);transform-origin:0 0;"><u>M</u>ore Colors...</span>
<svg class="r" style="left:671px;top:367px;" width="9" height="10" viewBox="0 0 9 10"><path d="M0.8 9 L1.2 7.5 L6 2.7 L7 3.7 L2.2 8.5Z" fill="none" stroke="#555" stroke-width="0.8"/><path d="M5.5 2.2 L7 0.7 Q8 0.2 8.5 1 Q9 1.8 8.2 2.6 L7.5 3.2Z" fill="#444"/></svg>
<span class="t" style="left:682.8px;top:368.15px;font-size:7.30px;color:#444;font-weight:normal;transform:scaleX(0.8850);transform-origin:0 0;"><u>E</u>yedropper</span>
<div class="r" style="left:0px;top:396px;width:768px;height:13px;background:#F1F1F1;"></div>
<div class="r" style="left:0px;top:396px;width:768px;height:0.8px;background:#DCDCDC;"></div>
<span class="t" style="left:4.0px;top:399.48px;font-size:7.21px;color:#444;font-weight:normal;transform:scaleX(0.8850);transform-origin:0 0;">Slide 9 of 11</span>
<svg class="r" style="left:50.5px;top:398.5px;" width="8" height="8" viewBox="0 0 8 8"><path d="M0.5 0.5 H4 V7 H0.5Z M4 0.5 H7 M4 3 H6" fill="none" stroke="#666" stroke-width="0.7"/><path d="M4.5 5 L5.5 6.5 L7.5 3.5" fill="none" stroke="#666" stroke-width="0.8"/></svg>
<span class="t" style="left:68.5px;top:399.49px;font-size:7.19px;color:#444;font-weight:normal;transform:scaleX(0.8850);transform-origin:0 0;">English (United States)</span>
<svg class="r" style="left:480px;top:398.5px;" width="7" height="8" viewBox="0 0 7 8"><path d="M3.5 0.5 L1.5 2.5 M3.5 0.5 L5.5 2.5 M0.5 4 H6.5 M0.5 5.5 H6.5 M0.5 7 H6.5" fill="none" stroke="#666" stroke-width="0.7"/></svg>
<span class="t" style="left:490.0px;top:399.54px;font-size:7.05px;color:#444;font-weight:normal;transform:scaleX(0.8850);transform-origin:0 0;">Notes</span>
<svg class="r" style="left:518px;top:399px;" width="7" height="7" viewBox="0 0 7 7"><path d="M0.5 0.5 H6.5 V4.5 H3 L1.5 6.5 V4.5 H0.5Z" fill="#666"/></svg>
<span class="t" style="left:527.4px;top:399.57px;font-size:6.96px;color:#444;font-weight:normal;transform:scaleX(0.8850);transform-origin:0 0;">Comments</span>
<div class="r" style="left:569px;top:396.8px;width:20.3px;height:12.2px;background:#D4D4D4;"></div>
<svg class="r" style="left:575px;top:398.5px;" width="9" height="8" viewBox="0 0 9 8"><rect x="0.5" y="0.5" width="8" height="7" fill="none" stroke="#666" stroke-width="0.7"/><path d="M0.5 3 H3 M0.5 5 H3 M3 0.5 V7.5" stroke="#666" stroke-width="0.6"/></svg>
<svg class="r" style="left:595.8px;top:398.5px;" width="9" height="8" viewBox="0 0 9 8"><rect x="0.5" y="0.5" width="3.2" height="2.8" fill="none" stroke="#666" stroke-width="0.6"/><rect x="5.3" y="0.5" width="3.2" height="2.8" fill="none" stroke="#666" stroke-width="0.6"/><rect x="0.5" y="4.7" width="3.2" height="2.8" fill="none" stroke="#666" stroke-width="0.6"/><rect x="5.3" y="4.7" width="3.2" height="2.8" fill="none" stroke="#666" stroke-width="0.6"/></svg>
<svg class="r" style="left:617.8px;top:398.5px;" width="9" height="8" viewBox="0 0 9 8"><path d="M0.5 1 Q2.5 0 4.5 1 Q6.5 0 8.5 1 V7.5 Q6.5 6.5 4.5 7.5 Q2.5 6.5 0.5 7.5Z M4.5 1 V7.5" fill="none" stroke="#666" stroke-width="0.7"/></svg>
<svg class="r" style="left:638.7px;top:398.5px;" width="9" height="9" viewBox="0 0 9 9"><path d="M0.5 0.8 H8.5 M1.5 0.8 V5 H7.5 V0.8 M4.5 5 V7 M3 8 L4.5 7 L6 8" fill="none" stroke="#666" stroke-width="0.7"/></svg>
<div class="r" style="left:656.5px;top:402.4px;width:4px;height:0.9px;background:#555;"></div>
<div class="r" style="left:661.8px;top:402.6px;width:57px;height:0.6px;background:#A8A8A8;"></div>
<div class="r" style="left:675px;top:399.3px;width:2.2px;height:6.6px;background:#555;"></div>
<div class="r" style="left:689.8px;top:401.6px;width:0.6px;height:2.2px;background:#A8A8A8;"></div>
<div class="r" style="left:721px;top:402.4px;width:4px;height:0.9px;background:#555;"></div>
<div class="r" style="left:722.55px;top:400.85px;width:0.9px;height:4px;background:#555;"></div>
<span class="t" style="left:733.7px;top:399.70px;font-size:6.55px;color:#444;font-weight:normal;transform:scaleX(0.8850);transform-origin:0 0;">50%</span>
<svg class="r" style="left:756.4px;top:398.8px;" width="7.5" height="7.5" viewBox="0 0 7.5 7.5"><rect x="0.4" y="0.4" width="6.7" height="6.7" fill="none" stroke="#666" stroke-width="0.7"/><path d="M1.5 1.5 L3 3 M6 1.5 L4.5 3 M1.5 6 L3 4.5 M6 6 L4.5 4.5" stroke="#666" stroke-width="0.6"/></svg>
</div></body></html>
